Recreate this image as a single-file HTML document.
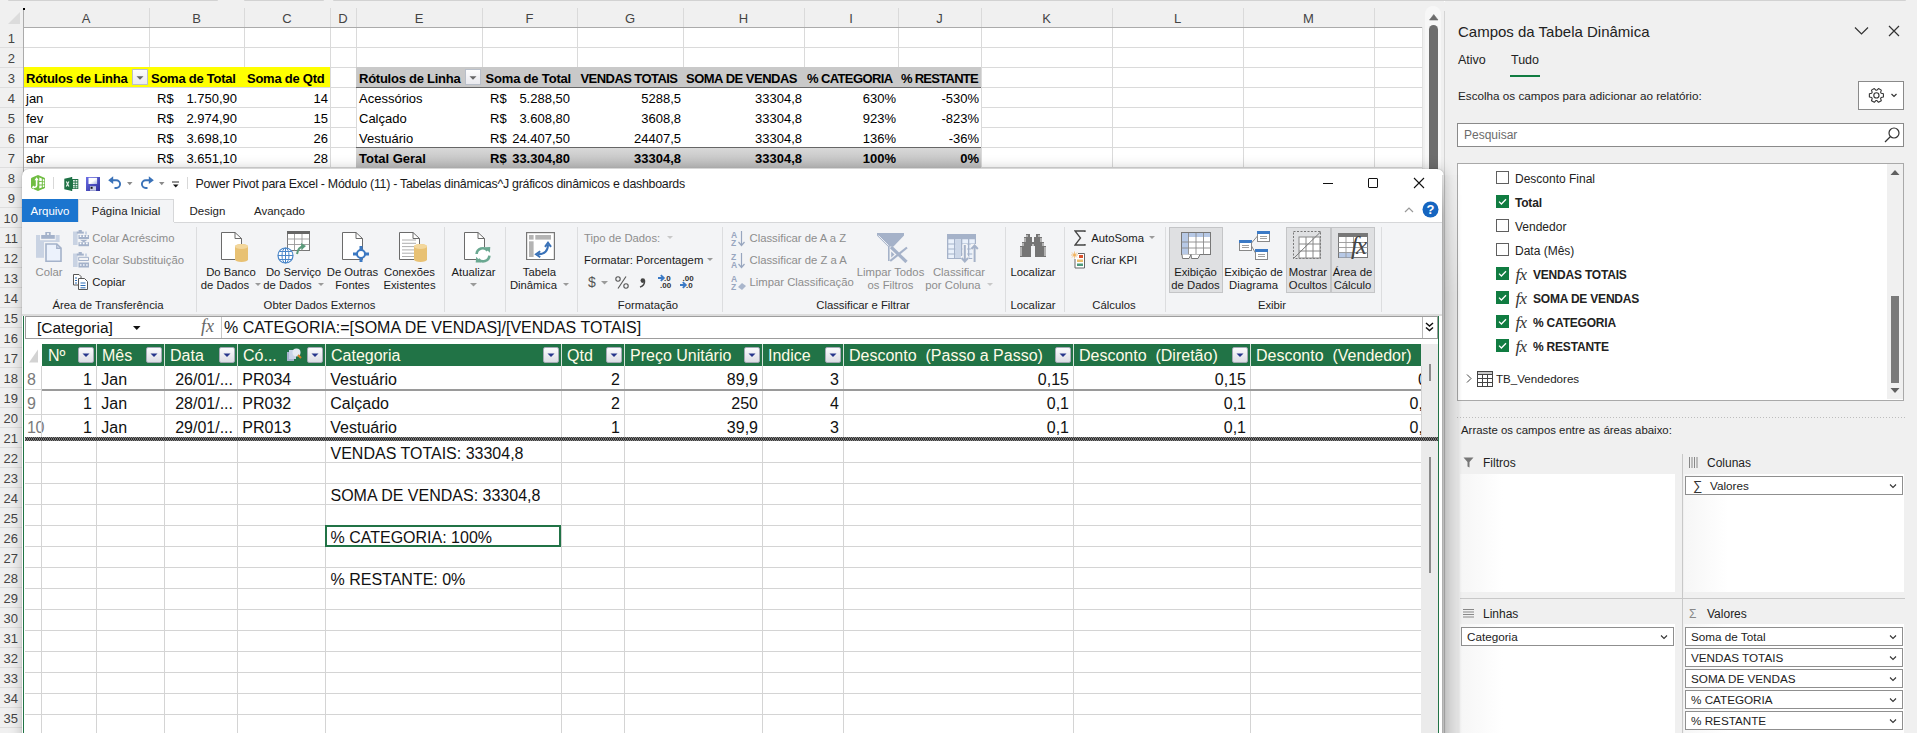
<!DOCTYPE html><html><head><meta charset="utf-8"><style>
*{margin:0;padding:0}
html,body{width:1917px;height:733px;overflow:hidden;background:#fff}
body{position:relative;font-family:"Liberation Sans",sans-serif}
div{position:absolute}
svg{position:absolute}
.t{white-space:nowrap}
.dd{display:inline-block;width:0;height:0;border-left:3.5px solid transparent;border-right:3.5px solid transparent;border-top:3.5px solid #9a9a9a;vertical-align:middle;margin-left:3px;position:relative;top:-1px}
</style></head><body><div style="left:0;top:0;width:1917px;height:733px;background:#fff"></div>
<div style="left:0px;top:0px;width:1444px;height:27px;background:#f0f0f0"></div>
<div style="left:8px;top:0px;width:210px;height:1.2px;background:#d2d2d2;border-radius:0 0 1px 1px"></div>
<div style="left:244px;top:0px;width:80px;height:1.2px;background:#d2d2d2;border-radius:0 0 1px 1px"></div>
<div style="left:333px;top:0px;width:1573px;height:1.2px;background:#d2d2d2;border-radius:0 0 1px 1px"></div>
<div style="left:23px;top:27px;width:1399px;height:1px;background:#ababab"></div>
<div style="left:0px;top:27px;width:23px;height:706px;background:#f0f0f0"></div>
<div style="left:23px;top:10px;width:1px;height:723px;background:#ababab"></div>
<svg style="position:absolute;left:8px;top:12px" width="13" height="13"><path d="M12 0 L12 12 L0 12 Z" fill="#dcdcdc"/></svg>
<div style="left:23px;top:8px;width:1.5px;height:1.5px;background:#000"></div>
<div style="left:149px;top:8px;width:1px;height:19px;background:#dadada"></div>
<div class="t" style="left:23.0px;width:126px;text-align:center;top:9.75px;height:17px;line-height:17px;font-size:13px;color:#444;font-weight:400;">A</div>
<div style="left:244px;top:8px;width:1px;height:19px;background:#dadada"></div>
<div class="t" style="left:149.0px;width:95px;text-align:center;top:9.75px;height:17px;line-height:17px;font-size:13px;color:#444;font-weight:400;">B</div>
<div style="left:330px;top:8px;width:1px;height:19px;background:#dadada"></div>
<div class="t" style="left:244.0px;width:86px;text-align:center;top:9.75px;height:17px;line-height:17px;font-size:13px;color:#444;font-weight:400;">C</div>
<div style="left:356px;top:8px;width:1px;height:19px;background:#dadada"></div>
<div class="t" style="left:330.0px;width:26px;text-align:center;top:9.75px;height:17px;line-height:17px;font-size:13px;color:#444;font-weight:400;">D</div>
<div style="left:482px;top:8px;width:1px;height:19px;background:#dadada"></div>
<div class="t" style="left:356.0px;width:126px;text-align:center;top:9.75px;height:17px;line-height:17px;font-size:13px;color:#444;font-weight:400;">E</div>
<div style="left:577px;top:8px;width:1px;height:19px;background:#dadada"></div>
<div class="t" style="left:482.0px;width:95px;text-align:center;top:9.75px;height:17px;line-height:17px;font-size:13px;color:#444;font-weight:400;">F</div>
<div style="left:683px;top:8px;width:1px;height:19px;background:#dadada"></div>
<div class="t" style="left:577.0px;width:106px;text-align:center;top:9.75px;height:17px;line-height:17px;font-size:13px;color:#444;font-weight:400;">G</div>
<div style="left:804px;top:8px;width:1px;height:19px;background:#dadada"></div>
<div class="t" style="left:683.0px;width:121px;text-align:center;top:9.75px;height:17px;line-height:17px;font-size:13px;color:#444;font-weight:400;">H</div>
<div style="left:898px;top:8px;width:1px;height:19px;background:#dadada"></div>
<div class="t" style="left:804.0px;width:94px;text-align:center;top:9.75px;height:17px;line-height:17px;font-size:13px;color:#444;font-weight:400;">I</div>
<div style="left:981px;top:8px;width:1px;height:19px;background:#dadada"></div>
<div class="t" style="left:898.0px;width:83px;text-align:center;top:9.75px;height:17px;line-height:17px;font-size:13px;color:#444;font-weight:400;">J</div>
<div style="left:1112px;top:8px;width:1px;height:19px;background:#dadada"></div>
<div class="t" style="left:981.0px;width:131px;text-align:center;top:9.75px;height:17px;line-height:17px;font-size:13px;color:#444;font-weight:400;">K</div>
<div style="left:1243px;top:8px;width:1px;height:19px;background:#dadada"></div>
<div class="t" style="left:1112.0px;width:131px;text-align:center;top:9.75px;height:17px;line-height:17px;font-size:13px;color:#444;font-weight:400;">L</div>
<div style="left:1374px;top:8px;width:1px;height:19px;background:#dadada"></div>
<div class="t" style="left:1243.0px;width:131px;text-align:center;top:9.75px;height:17px;line-height:17px;font-size:13px;color:#444;font-weight:400;">M</div>
<div style="left:1422px;top:8px;width:1px;height:19px;background:#dadada"></div>
<div style="left:24px;top:47px;width:1398px;height:1px;background:#dadada"></div>
<div style="left:0px;top:47px;width:23px;height:1px;background:#dedede"></div>
<div style="left:24px;top:67px;width:1398px;height:1px;background:#dadada"></div>
<div style="left:0px;top:67px;width:23px;height:1px;background:#dedede"></div>
<div style="left:24px;top:87px;width:1398px;height:1px;background:#dadada"></div>
<div style="left:0px;top:87px;width:23px;height:1px;background:#dedede"></div>
<div style="left:24px;top:107px;width:333px;height:1px;background:#dadada"></div>
<div style="left:981px;top:107px;width:441px;height:1px;background:#dadada"></div>
<div style="left:0px;top:107px;width:23px;height:1px;background:#dedede"></div>
<div style="left:24px;top:127px;width:333px;height:1px;background:#dadada"></div>
<div style="left:981px;top:127px;width:441px;height:1px;background:#dadada"></div>
<div style="left:0px;top:127px;width:23px;height:1px;background:#dedede"></div>
<div style="left:24px;top:147px;width:1398px;height:1px;background:#dadada"></div>
<div style="left:0px;top:147px;width:23px;height:1px;background:#dedede"></div>
<div style="left:24px;top:167px;width:1398px;height:1px;background:#dadada"></div>
<div style="left:0px;top:167px;width:23px;height:1px;background:#dedede"></div>
<div style="left:149px;top:28px;width:1px;height:40px;background:#dadada"></div>
<div style="left:244px;top:28px;width:1px;height:40px;background:#dadada"></div>
<div style="left:330px;top:28px;width:1px;height:140px;background:#dadada"></div>
<div style="left:356px;top:28px;width:1px;height:140px;background:#dadada"></div>
<div style="left:482px;top:28px;width:1px;height:40px;background:#dadada"></div>
<div style="left:577px;top:28px;width:1px;height:40px;background:#dadada"></div>
<div style="left:683px;top:28px;width:1px;height:40px;background:#dadada"></div>
<div style="left:804px;top:28px;width:1px;height:40px;background:#dadada"></div>
<div style="left:898px;top:28px;width:1px;height:40px;background:#dadada"></div>
<div style="left:981px;top:28px;width:1px;height:140px;background:#dadada"></div>
<div style="left:1112px;top:28px;width:1px;height:140px;background:#dadada"></div>
<div style="left:1243px;top:28px;width:1px;height:140px;background:#dadada"></div>
<div style="left:1374px;top:28px;width:1px;height:140px;background:#dadada"></div>
<div style="left:1422px;top:28px;width:1px;height:140px;background:#dadada"></div>
<div class="t" style="left:-5px;width:20px;text-align:right;top:29.75px;height:17px;line-height:17px;font-size:13px;color:#444;font-weight:400;">1</div>
<div class="t" style="left:-5px;width:20px;text-align:right;top:49.75px;height:17px;line-height:17px;font-size:13px;color:#444;font-weight:400;">2</div>
<div class="t" style="left:-5px;width:20px;text-align:right;top:69.75px;height:17px;line-height:17px;font-size:13px;color:#444;font-weight:400;">3</div>
<div class="t" style="left:-5px;width:20px;text-align:right;top:89.75px;height:17px;line-height:17px;font-size:13px;color:#444;font-weight:400;">4</div>
<div class="t" style="left:-5px;width:20px;text-align:right;top:109.75px;height:17px;line-height:17px;font-size:13px;color:#444;font-weight:400;">5</div>
<div class="t" style="left:-5px;width:20px;text-align:right;top:129.75px;height:17px;line-height:17px;font-size:13px;color:#444;font-weight:400;">6</div>
<div class="t" style="left:-5px;width:20px;text-align:right;top:149.75px;height:17px;line-height:17px;font-size:13px;color:#444;font-weight:400;">7</div>
<div class="t" style="left:-5px;width:20px;text-align:right;top:169.75px;height:17px;line-height:17px;font-size:13px;color:#444;font-weight:400;">8</div>
<div class="t" style="left:-5px;width:20px;text-align:right;top:189.75px;height:17px;line-height:17px;font-size:13px;color:#444;font-weight:400;">9</div>
<div class="t" style="left:-2px;width:20px;text-align:right;top:209.75px;height:17px;line-height:17px;font-size:13px;color:#444;font-weight:400;">10</div>
<div class="t" style="left:-2px;width:20px;text-align:right;top:229.75px;height:17px;line-height:17px;font-size:13px;color:#444;font-weight:400;">11</div>
<div class="t" style="left:-2px;width:20px;text-align:right;top:249.75px;height:17px;line-height:17px;font-size:13px;color:#444;font-weight:400;">12</div>
<div class="t" style="left:-2px;width:20px;text-align:right;top:269.75px;height:17px;line-height:17px;font-size:13px;color:#444;font-weight:400;">13</div>
<div class="t" style="left:-2px;width:20px;text-align:right;top:289.75px;height:17px;line-height:17px;font-size:13px;color:#444;font-weight:400;">14</div>
<div class="t" style="left:-2px;width:20px;text-align:right;top:309.75px;height:17px;line-height:17px;font-size:13px;color:#444;font-weight:400;">15</div>
<div class="t" style="left:-2px;width:20px;text-align:right;top:329.75px;height:17px;line-height:17px;font-size:13px;color:#444;font-weight:400;">16</div>
<div class="t" style="left:-2px;width:20px;text-align:right;top:349.75px;height:17px;line-height:17px;font-size:13px;color:#444;font-weight:400;">17</div>
<div class="t" style="left:-2px;width:20px;text-align:right;top:369.75px;height:17px;line-height:17px;font-size:13px;color:#444;font-weight:400;">18</div>
<div class="t" style="left:-2px;width:20px;text-align:right;top:389.75px;height:17px;line-height:17px;font-size:13px;color:#444;font-weight:400;">19</div>
<div class="t" style="left:-2px;width:20px;text-align:right;top:409.75px;height:17px;line-height:17px;font-size:13px;color:#444;font-weight:400;">20</div>
<div class="t" style="left:-2px;width:20px;text-align:right;top:429.75px;height:17px;line-height:17px;font-size:13px;color:#444;font-weight:400;">21</div>
<div class="t" style="left:-2px;width:20px;text-align:right;top:449.75px;height:17px;line-height:17px;font-size:13px;color:#444;font-weight:400;">22</div>
<div class="t" style="left:-2px;width:20px;text-align:right;top:469.75px;height:17px;line-height:17px;font-size:13px;color:#444;font-weight:400;">23</div>
<div class="t" style="left:-2px;width:20px;text-align:right;top:489.75px;height:17px;line-height:17px;font-size:13px;color:#444;font-weight:400;">24</div>
<div class="t" style="left:-2px;width:20px;text-align:right;top:509.75px;height:17px;line-height:17px;font-size:13px;color:#444;font-weight:400;">25</div>
<div class="t" style="left:-2px;width:20px;text-align:right;top:529.75px;height:17px;line-height:17px;font-size:13px;color:#444;font-weight:400;">26</div>
<div class="t" style="left:-2px;width:20px;text-align:right;top:549.75px;height:17px;line-height:17px;font-size:13px;color:#444;font-weight:400;">27</div>
<div class="t" style="left:-2px;width:20px;text-align:right;top:569.75px;height:17px;line-height:17px;font-size:13px;color:#444;font-weight:400;">28</div>
<div class="t" style="left:-2px;width:20px;text-align:right;top:589.75px;height:17px;line-height:17px;font-size:13px;color:#444;font-weight:400;">29</div>
<div class="t" style="left:-2px;width:20px;text-align:right;top:609.75px;height:17px;line-height:17px;font-size:13px;color:#444;font-weight:400;">30</div>
<div class="t" style="left:-2px;width:20px;text-align:right;top:629.75px;height:17px;line-height:17px;font-size:13px;color:#444;font-weight:400;">31</div>
<div class="t" style="left:-2px;width:20px;text-align:right;top:649.75px;height:17px;line-height:17px;font-size:13px;color:#444;font-weight:400;">32</div>
<div class="t" style="left:-2px;width:20px;text-align:right;top:669.75px;height:17px;line-height:17px;font-size:13px;color:#444;font-weight:400;">33</div>
<div class="t" style="left:-2px;width:20px;text-align:right;top:689.75px;height:17px;line-height:17px;font-size:13px;color:#444;font-weight:400;">34</div>
<div class="t" style="left:-2px;width:20px;text-align:right;top:709.75px;height:17px;line-height:17px;font-size:13px;color:#444;font-weight:400;">35</div>
<div style="left:0px;top:187px;width:22px;height:1px;background:#dedede"></div>
<div style="left:0px;top:207px;width:22px;height:1px;background:#dedede"></div>
<div style="left:0px;top:227px;width:22px;height:1px;background:#dedede"></div>
<div style="left:0px;top:247px;width:22px;height:1px;background:#dedede"></div>
<div style="left:0px;top:267px;width:22px;height:1px;background:#dedede"></div>
<div style="left:0px;top:287px;width:22px;height:1px;background:#dedede"></div>
<div style="left:0px;top:307px;width:22px;height:1px;background:#dedede"></div>
<div style="left:0px;top:327px;width:22px;height:1px;background:#dedede"></div>
<div style="left:0px;top:347px;width:22px;height:1px;background:#dedede"></div>
<div style="left:0px;top:367px;width:22px;height:1px;background:#dedede"></div>
<div style="left:0px;top:387px;width:22px;height:1px;background:#dedede"></div>
<div style="left:0px;top:407px;width:22px;height:1px;background:#dedede"></div>
<div style="left:0px;top:427px;width:22px;height:1px;background:#dedede"></div>
<div style="left:0px;top:447px;width:22px;height:1px;background:#dedede"></div>
<div style="left:0px;top:467px;width:22px;height:1px;background:#dedede"></div>
<div style="left:0px;top:487px;width:22px;height:1px;background:#dedede"></div>
<div style="left:0px;top:507px;width:22px;height:1px;background:#dedede"></div>
<div style="left:0px;top:527px;width:22px;height:1px;background:#dedede"></div>
<div style="left:0px;top:547px;width:22px;height:1px;background:#dedede"></div>
<div style="left:0px;top:567px;width:22px;height:1px;background:#dedede"></div>
<div style="left:0px;top:587px;width:22px;height:1px;background:#dedede"></div>
<div style="left:0px;top:607px;width:22px;height:1px;background:#dedede"></div>
<div style="left:0px;top:627px;width:22px;height:1px;background:#dedede"></div>
<div style="left:0px;top:647px;width:22px;height:1px;background:#dedede"></div>
<div style="left:0px;top:667px;width:22px;height:1px;background:#dedede"></div>
<div style="left:0px;top:687px;width:22px;height:1px;background:#dedede"></div>
<div style="left:0px;top:707px;width:22px;height:1px;background:#dedede"></div>
<div style="left:0px;top:727px;width:22px;height:1px;background:#dedede"></div>
<div style="left:24px;top:67px;width:306px;height:20px;background:#ffff00"></div>
<div class="t" style="left:26px;white-space:nowrap;top:69.75px;height:17px;line-height:17px;font-size:13px;color:#000;font-weight:700;letter-spacing:-0.25px">Rótulos de Linha</div>
<div class="t" style="left:151px;white-space:nowrap;top:69.75px;height:17px;line-height:17px;font-size:13px;color:#000;font-weight:700;letter-spacing:-0.25px">Soma de Total</div>
<div class="t" style="left:247px;white-space:nowrap;top:69.75px;height:17px;line-height:17px;font-size:13px;color:#000;font-weight:700;letter-spacing:-0.25px">Soma de Qtd</div>
<div style="left:132px;top:69px;width:16px;height:16px;background:linear-gradient(#fdfdfd,#e9e9ee);border:1px solid #b9bfc9;box-sizing:border-box"><svg width="14" height="14" style="position:absolute;left:0;top:0"><path d="M3.5 6.3 L10.5 6.3 L7 9.8 Z" fill="#666"/></svg></div>
<div class="t" style="left:26px;white-space:nowrap;top:89.75px;height:17px;line-height:17px;font-size:13px;color:#000;font-weight:400;">jan</div>
<div class="t" style="left:157px;white-space:nowrap;top:89.75px;height:17px;line-height:17px;font-size:13px;color:#000;font-weight:400;">R$</div>
<div class="t" style="left:137px;width:100px;text-align:right;top:89.75px;height:17px;line-height:17px;font-size:13px;color:#000;font-weight:400;">1.750,90</div>
<div class="t" style="left:268px;width:60px;text-align:right;top:89.75px;height:17px;line-height:17px;font-size:13px;color:#000;font-weight:400;">14</div>
<div class="t" style="left:26px;white-space:nowrap;top:109.75px;height:17px;line-height:17px;font-size:13px;color:#000;font-weight:400;">fev</div>
<div class="t" style="left:157px;white-space:nowrap;top:109.75px;height:17px;line-height:17px;font-size:13px;color:#000;font-weight:400;">R$</div>
<div class="t" style="left:137px;width:100px;text-align:right;top:109.75px;height:17px;line-height:17px;font-size:13px;color:#000;font-weight:400;">2.974,90</div>
<div class="t" style="left:268px;width:60px;text-align:right;top:109.75px;height:17px;line-height:17px;font-size:13px;color:#000;font-weight:400;">15</div>
<div class="t" style="left:26px;white-space:nowrap;top:129.75px;height:17px;line-height:17px;font-size:13px;color:#000;font-weight:400;">mar</div>
<div class="t" style="left:157px;white-space:nowrap;top:129.75px;height:17px;line-height:17px;font-size:13px;color:#000;font-weight:400;">R$</div>
<div class="t" style="left:137px;width:100px;text-align:right;top:129.75px;height:17px;line-height:17px;font-size:13px;color:#000;font-weight:400;">3.698,10</div>
<div class="t" style="left:268px;width:60px;text-align:right;top:129.75px;height:17px;line-height:17px;font-size:13px;color:#000;font-weight:400;">26</div>
<div class="t" style="left:26px;white-space:nowrap;top:149.75px;height:17px;line-height:17px;font-size:13px;color:#000;font-weight:400;">abr</div>
<div class="t" style="left:157px;white-space:nowrap;top:149.75px;height:17px;line-height:17px;font-size:13px;color:#000;font-weight:400;">R$</div>
<div class="t" style="left:137px;width:100px;text-align:right;top:149.75px;height:17px;line-height:17px;font-size:13px;color:#000;font-weight:400;">3.651,10</div>
<div class="t" style="left:268px;width:60px;text-align:right;top:149.75px;height:17px;line-height:17px;font-size:13px;color:#000;font-weight:400;">28</div>
<div style="left:356px;top:67px;width:625px;height:20px;background:#c9c9c9"></div>
<div style="left:356px;top:87px;width:625px;height:1px;background:#666"></div>
<div class="t" style="left:359px;white-space:nowrap;top:69.75px;height:17px;line-height:17px;font-size:13px;color:#000;font-weight:700;letter-spacing:-0.25px">Rótulos de Linha</div>
<div style="left:465px;top:69px;width:16px;height:16px;background:linear-gradient(#fdfdfd,#e9e9ee);border:1px solid #b9bfc9;box-sizing:border-box"><svg width="14" height="14" style="position:absolute;left:0;top:0"><path d="M3.5 6.3 L10.5 6.3 L7 9.8 Z" fill="#666"/></svg></div>
<div class="t" style="left:485.5px;white-space:nowrap;top:69.75px;height:17px;line-height:17px;font-size:13px;color:#000;font-weight:700;letter-spacing:-0.18px">Soma de Total</div>
<div class="t" style="left:580.5px;white-space:nowrap;top:69.75px;height:17px;line-height:17px;font-size:13px;color:#000;font-weight:700;letter-spacing:-0.56px">VENDAS TOTAIS</div>
<div class="t" style="left:686px;white-space:nowrap;top:69.75px;height:17px;line-height:17px;font-size:13px;color:#000;font-weight:700;letter-spacing:-0.5px">SOMA DE VENDAS</div>
<div class="t" style="left:807px;white-space:nowrap;top:69.75px;height:17px;line-height:17px;font-size:13px;color:#000;font-weight:700;letter-spacing:-0.61px">% CATEGORIA</div>
<div class="t" style="left:901px;white-space:nowrap;top:69.75px;height:17px;line-height:17px;font-size:13px;color:#000;font-weight:700;letter-spacing:-0.73px">% RESTANTE</div>
<div class="t" style="left:359px;white-space:nowrap;top:89.75px;height:17px;line-height:17px;font-size:13px;color:#000;font-weight:400;">Acessórios</div>
<div class="t" style="left:490px;white-space:nowrap;top:89.75px;height:17px;line-height:17px;font-size:13px;color:#000;font-weight:400;">R$</div>
<div class="t" style="left:470px;width:100px;text-align:right;top:89.75px;height:17px;line-height:17px;font-size:13px;color:#000;font-weight:400;">5.288,50</div>
<div class="t" style="left:581px;width:100px;text-align:right;top:89.75px;height:17px;line-height:17px;font-size:13px;color:#000;font-weight:400;">5288,5</div>
<div class="t" style="left:702px;width:100px;text-align:right;top:89.75px;height:17px;line-height:17px;font-size:13px;color:#000;font-weight:400;">33304,8</div>
<div class="t" style="left:796px;width:100px;text-align:right;top:89.75px;height:17px;line-height:17px;font-size:13px;color:#000;font-weight:400;">630%</div>
<div class="t" style="left:879px;width:100px;text-align:right;top:89.75px;height:17px;line-height:17px;font-size:13px;color:#000;font-weight:400;">-530%</div>
<div class="t" style="left:359px;white-space:nowrap;top:109.75px;height:17px;line-height:17px;font-size:13px;color:#000;font-weight:400;">Calçado</div>
<div class="t" style="left:490px;white-space:nowrap;top:109.75px;height:17px;line-height:17px;font-size:13px;color:#000;font-weight:400;">R$</div>
<div class="t" style="left:470px;width:100px;text-align:right;top:109.75px;height:17px;line-height:17px;font-size:13px;color:#000;font-weight:400;">3.608,80</div>
<div class="t" style="left:581px;width:100px;text-align:right;top:109.75px;height:17px;line-height:17px;font-size:13px;color:#000;font-weight:400;">3608,8</div>
<div class="t" style="left:702px;width:100px;text-align:right;top:109.75px;height:17px;line-height:17px;font-size:13px;color:#000;font-weight:400;">33304,8</div>
<div class="t" style="left:796px;width:100px;text-align:right;top:109.75px;height:17px;line-height:17px;font-size:13px;color:#000;font-weight:400;">923%</div>
<div class="t" style="left:879px;width:100px;text-align:right;top:109.75px;height:17px;line-height:17px;font-size:13px;color:#000;font-weight:400;">-823%</div>
<div class="t" style="left:359px;white-space:nowrap;top:129.75px;height:17px;line-height:17px;font-size:13px;color:#000;font-weight:400;">Vestuário</div>
<div class="t" style="left:490px;white-space:nowrap;top:129.75px;height:17px;line-height:17px;font-size:13px;color:#000;font-weight:400;">R$</div>
<div class="t" style="left:470px;width:100px;text-align:right;top:129.75px;height:17px;line-height:17px;font-size:13px;color:#000;font-weight:400;">24.407,50</div>
<div class="t" style="left:581px;width:100px;text-align:right;top:129.75px;height:17px;line-height:17px;font-size:13px;color:#000;font-weight:400;">24407,5</div>
<div class="t" style="left:702px;width:100px;text-align:right;top:129.75px;height:17px;line-height:17px;font-size:13px;color:#000;font-weight:400;">33304,8</div>
<div class="t" style="left:796px;width:100px;text-align:right;top:129.75px;height:17px;line-height:17px;font-size:13px;color:#000;font-weight:400;">136%</div>
<div class="t" style="left:879px;width:100px;text-align:right;top:129.75px;height:17px;line-height:17px;font-size:13px;color:#000;font-weight:400;">-36%</div>
<div style="left:356px;top:147px;width:625px;height:1px;background:#666"></div>
<div style="left:356px;top:148px;width:625px;height:20px;background:linear-gradient(#d8d8d8,#c4c4c4 70%,#bdbdbd)"></div>
<div class="t" style="left:359px;white-space:nowrap;top:149.75px;height:17px;line-height:17px;font-size:13px;color:#000;font-weight:700;">Total Geral</div>
<div class="t" style="left:490px;white-space:nowrap;top:149.75px;height:17px;line-height:17px;font-size:13px;color:#000;font-weight:700;">R$</div>
<div class="t" style="left:470px;width:100px;text-align:right;top:149.75px;height:17px;line-height:17px;font-size:13px;color:#000;font-weight:700;">33.304,80</div>
<div class="t" style="left:581px;width:100px;text-align:right;top:149.75px;height:17px;line-height:17px;font-size:13px;color:#000;font-weight:700;">33304,8</div>
<div class="t" style="left:702px;width:100px;text-align:right;top:149.75px;height:17px;line-height:17px;font-size:13px;color:#000;font-weight:700;">33304,8</div>
<div class="t" style="left:796px;width:100px;text-align:right;top:149.75px;height:17px;line-height:17px;font-size:13px;color:#000;font-weight:700;">100%</div>
<div class="t" style="left:879px;width:100px;text-align:right;top:149.75px;height:17px;line-height:17px;font-size:13px;color:#000;font-weight:700;">0%</div>
<div style="left:1422px;top:0px;width:22px;height:733px;background:#f0f0f0"></div>
<div style="left:1425px;top:6px;width:16px;height:727px;background:#f7f7f7;border-radius:8px"></div>
<svg style="position:absolute;left:1428.5px;top:12.5px" width="10" height="8"><path d="M0.5 7 L4.75 1.5 L9 7 Z" fill="#6d6d6d" stroke="#6d6d6d" stroke-width="0.6" stroke-linejoin="round"/></svg>
<div style="left:1429px;top:25px;width:9px;height:708px;background:#6d6d6d;border-radius:4.5px"></div>
<div style="left:1444px;top:10px;width:1px;height:723px;background:#d4d4d4"></div>
<div style="left:1445px;top:0px;width:472px;height:733px;background:#f0f0f0"></div>
<div style="left:1420px;top:0px;width:486px;height:1.2px;background:#d2d2d2;border-radius:0 0 1px 1px"></div>
<div style="left:1422px;top:27px;width:1px;height:142px;background:#e2e2e2"></div>
<div style="left:1444px;top:1.5px;width:1px;height:9px;background:#f0f0f0"></div>
<div class="t" style="left:1458px;white-space:nowrap;top:21.75px;height:20px;line-height:20px;font-size:15px;color:#222;font-weight:400;">Campos da Tabela Dinâmica</div>
<svg style="position:absolute;left:1854px;top:26px" width="15" height="10"><path d="M1 1.5 L7.5 8 L14 1.5" stroke="#333" stroke-width="1.2" fill="none"/></svg>
<svg style="position:absolute;left:1888px;top:25px" width="12" height="12"><path d="M1 1 L11 11 M11 1 L1 11" stroke="#333" stroke-width="1.2" fill="none"/></svg>
<div class="t" style="left:1458px;white-space:nowrap;top:51.75px;height:16px;line-height:16px;font-size:12.5px;color:#222;font-weight:400;">Ativo</div>
<div class="t" style="left:1511px;white-space:nowrap;top:51.75px;height:16px;line-height:16px;font-size:12.5px;color:#222;font-weight:400;">Tudo</div>
<div style="left:1510px;top:75px;width:30px;height:2px;background:#107c41"></div>
<div class="t" style="left:1458px;white-space:nowrap;top:88.25px;height:15px;line-height:15px;font-size:11.7px;color:#222;font-weight:400;">Escolha os campos para adicionar ao relatório:</div>
<div style="left:1858px;top:81px;width:46px;height:29px;background:#fff;border:1px solid #8a8a8a;box-sizing:border-box"><svg width="46" height="29" style="position:absolute;left:-1px;top:-1px"><g transform="translate(18.4,14.4)" fill="none" stroke="#333" stroke-width="1.1" stroke-linejoin="round"><circle r="2.6"/><path d="M4.75,-2.12 L7.02,-1.62 L7.02,1.62 L4.75,2.12 L4.21,3.06 L4.91,5.27 L2.11,6.89 L0.54,5.17 L-0.54,5.17 L-2.11,6.89 L-4.91,5.27 L-4.21,3.06 L-4.75,2.12 L-7.02,1.62 L-7.02,-1.62 L-4.75,-2.12 L-4.21,-3.06 L-4.91,-5.27 L-2.11,-6.89 L-0.54,-5.17 L0.54,-5.17 L2.11,-6.89 L4.91,-5.27 L4.21,-3.06 Z"/></g><path d="M33.5 13 L36 15.5 L38.5 13" stroke="#333" stroke-width="1.2" fill="none"/></svg></div>
<div style="left:1457px;top:123px;width:447px;height:24px;background:#fff;border:1px solid #8a8a8a;box-sizing:border-box"></div>
<div class="t" style="left:1464px;white-space:nowrap;top:126.75px;height:16px;line-height:16px;font-size:12px;color:#6b6b6b;font-weight:400;">Pesquisar</div>
<svg style="position:absolute;left:1883px;top:125px" width="18" height="20"><circle cx="11" cy="8" r="5" stroke="#333" stroke-width="1.2" fill="none"/><path d="M7.5 11.5 L2 17" stroke="#333" stroke-width="1.3"/></svg>
<div style="left:1457px;top:163px;width:447px;height:238px;background:#fff;border:1px solid #a9a9a9;box-sizing:border-box"></div>
<div style="left:1887px;top:164px;width:16px;height:235px;background:#f0f0f0"></div>
<svg style="position:absolute;left:1889px;top:167px" width="12" height="10"><path d="M1.5 8 L6 3 L10.5 8 Z" fill="#606060"/></svg>
<svg style="position:absolute;left:1889px;top:386px" width="12" height="10"><path d="M1.5 2 L6 7 L10.5 2 Z" fill="#606060"/></svg>
<div style="left:1891px;top:296px;width:8px;height:87px;background:#7a7a7a"></div>
<div style="left:1496px;top:171.0px;width:13px;height:13px;background:#fff;border:1px solid #5f5f5f;box-sizing:border-box"></div>
<div class="t" style="left:1515px;white-space:nowrap;top:170.55px;height:16px;line-height:16px;font-size:12px;color:#222;font-weight:400;">Desconto Final</div>
<div style="left:1496px;top:195.05px;width:13px;height:13px;background:#107c41"><svg width="13" height="13" style="position:absolute;left:0;top:0"><path d="M3 6.6 L5.4 9 L10 4.2" stroke="#fff" stroke-width="1.3" fill="none"/></svg></div>
<div class="t" style="left:1515px;white-space:nowrap;top:194.60px;height:16px;line-height:16px;font-size:12px;color:#222;font-weight:700;letter-spacing:-0.2px">Total</div>
<div style="left:1496px;top:219.1px;width:13px;height:13px;background:#fff;border:1px solid #5f5f5f;box-sizing:border-box"></div>
<div class="t" style="left:1515px;white-space:nowrap;top:218.65px;height:16px;line-height:16px;font-size:12px;color:#222;font-weight:400;">Vendedor</div>
<div style="left:1496px;top:243.15px;width:13px;height:13px;background:#fff;border:1px solid #5f5f5f;box-sizing:border-box"></div>
<div class="t" style="left:1515px;white-space:nowrap;top:242.70px;height:16px;line-height:16px;font-size:12px;color:#222;font-weight:400;">Data (Mês)</div>
<div style="left:1496px;top:267.2px;width:13px;height:13px;background:#107c41"><svg width="13" height="13" style="position:absolute;left:0;top:0"><path d="M3 6.6 L5.4 9 L10 4.2" stroke="#fff" stroke-width="1.3" fill="none"/></svg></div>
<div class="t" style="left:1515.5px;white-space:nowrap;top:263.75px;height:22px;line-height:22px;font-size:17px;color:#333;font-weight:400;font-family:'Liberation Serif',serif;font-style:italic;letter-spacing:-0.8px">fx</div>
<div class="t" style="left:1533px;white-space:nowrap;top:266.75px;height:16px;line-height:16px;font-size:12px;color:#222;font-weight:700;letter-spacing:-0.2px">VENDAS TOTAIS</div>
<div style="left:1496px;top:291.25px;width:13px;height:13px;background:#107c41"><svg width="13" height="13" style="position:absolute;left:0;top:0"><path d="M3 6.6 L5.4 9 L10 4.2" stroke="#fff" stroke-width="1.3" fill="none"/></svg></div>
<div class="t" style="left:1515.5px;white-space:nowrap;top:287.80px;height:22px;line-height:22px;font-size:17px;color:#333;font-weight:400;font-family:'Liberation Serif',serif;font-style:italic;letter-spacing:-0.8px">fx</div>
<div class="t" style="left:1533px;white-space:nowrap;top:290.80px;height:16px;line-height:16px;font-size:12px;color:#222;font-weight:700;letter-spacing:-0.2px">SOMA DE VENDAS</div>
<div style="left:1496px;top:315.3px;width:13px;height:13px;background:#107c41"><svg width="13" height="13" style="position:absolute;left:0;top:0"><path d="M3 6.6 L5.4 9 L10 4.2" stroke="#fff" stroke-width="1.3" fill="none"/></svg></div>
<div class="t" style="left:1515.5px;white-space:nowrap;top:311.85px;height:22px;line-height:22px;font-size:17px;color:#333;font-weight:400;font-family:'Liberation Serif',serif;font-style:italic;letter-spacing:-0.8px">fx</div>
<div class="t" style="left:1533px;white-space:nowrap;top:314.85px;height:16px;line-height:16px;font-size:12px;color:#222;font-weight:700;letter-spacing:-0.2px">% CATEGORIA</div>
<div style="left:1496px;top:339.34999999999997px;width:13px;height:13px;background:#107c41"><svg width="13" height="13" style="position:absolute;left:0;top:0"><path d="M3 6.6 L5.4 9 L10 4.2" stroke="#fff" stroke-width="1.3" fill="none"/></svg></div>
<div class="t" style="left:1515.5px;white-space:nowrap;top:335.90px;height:22px;line-height:22px;font-size:17px;color:#333;font-weight:400;font-family:'Liberation Serif',serif;font-style:italic;letter-spacing:-0.8px">fx</div>
<div class="t" style="left:1533px;white-space:nowrap;top:338.90px;height:16px;line-height:16px;font-size:12px;color:#222;font-weight:700;letter-spacing:-0.2px">% RESTANTE</div>
<svg style="position:absolute;left:1465px;top:373px" width="8" height="11"><path d="M2 1.5 L6 5.5 L2 9.5" stroke="#444" stroke-width="1" fill="none"/></svg>
<svg style="position:absolute;left:1477px;top:371px" width="17" height="17"><g fill="none" stroke="#444" stroke-width="1"><rect x="0.5" y="0.5" width="15" height="15"/><path d="M0.5 7.5 H15.5 M0.5 11.5 H15.5 M5.5 3.5 V15.5 M10.5 3.5 V15.5 M0.5 3.5 H15.5"/></g><rect x="1" y="1" width="14" height="2" fill="#c8c8c8"/></svg>
<div class="t" style="left:1496px;white-space:nowrap;top:370.75px;height:15px;line-height:15px;font-size:11.6px;color:#222;font-weight:400;">TB_Vendedores</div>
<div style="left:1457px;top:417px;width:450px;height:1px;background-image:linear-gradient(90deg,#bdbdbd 50%,transparent 50%);background-size:3px 1px"></div>
<div class="t" style="left:1461px;white-space:nowrap;top:422.75px;height:15px;line-height:15px;font-size:11.4px;color:#222;font-weight:400;">Arraste os campos entre as áreas abaixo:</div>
<svg style="position:absolute;left:1463px;top:457px" width="11" height="11"><path d="M0.5 0.5 H10.5 L6.5 5 V10.5 L4.5 9.5 V5 Z" fill="#777"/></svg>
<div class="t" style="left:1483px;white-space:nowrap;top:455.05px;height:16px;line-height:16px;font-size:12px;color:#222;font-weight:400;">Filtros</div>
<svg style="position:absolute;left:1689px;top:457px" width="10" height="11"><path d="M0.5 0 V11 M3 0 V11 M5.5 0 V11 M8 0 V11" stroke="#888" stroke-width="1"/></svg>
<div class="t" style="left:1707px;white-space:nowrap;top:455.05px;height:16px;line-height:16px;font-size:12px;color:#222;font-weight:400;">Colunas</div>
<div style="left:1460px;top:474px;width:215px;height:118px;background:linear-gradient(90deg,#f6f6f6,#fff 20%)"></div>
<div style="left:1684px;top:474px;width:220px;height:118px;background:linear-gradient(90deg,#f6f6f6,#fff 20%)"></div>
<div style="left:1682px;top:454px;width:1px;height:279px;background:#c8c8c8"></div>
<div style="left:1460px;top:598px;width:445px;height:1px;background:#c8c8c8"></div>
<svg style="position:absolute;left:1463px;top:608px" width="11" height="11"><path d="M0 1.5 H11 M0 4 H11 M0 6.5 H11 M0 9 H11" stroke="#888" stroke-width="1"/></svg>
<div class="t" style="left:1483px;white-space:nowrap;top:606.25px;height:16px;line-height:16px;font-size:12px;color:#222;font-weight:400;">Linhas</div>
<div class="t" style="left:1689px;white-space:nowrap;top:606.25px;height:16px;line-height:16px;font-size:12px;color:#888;font-weight:400;">Σ</div>
<div class="t" style="left:1707px;white-space:nowrap;top:606.25px;height:16px;line-height:16px;font-size:12px;color:#222;font-weight:400;">Valores</div>
<div style="left:1460px;top:624px;width:215px;height:109px;background:linear-gradient(90deg,#f6f6f6,#fff 20%)"></div>
<div style="left:1684px;top:624px;width:220px;height:109px;background:linear-gradient(90deg,#f6f6f6,#fff 20%)"></div>
<div style="left:1685px;top:476px;width:218px;height:19px;background:#fff;border:1px solid #8f8f8f;box-sizing:border-box"></div>
<div class="t" style="left:1693px;white-space:nowrap;top:477.25px;height:17px;line-height:17px;font-size:13px;color:#333;font-weight:400;">∑</div>
<div class="t" style="left:1710px;white-space:nowrap;top:477.75px;height:15px;line-height:15px;font-size:11.7px;color:#222;font-weight:400;">Valores</div>
<svg style="position:absolute;left:1889px;top:483px" width="8" height="6"><path d="M1 1.5 L4 4.5 L7 1.5" stroke="#333" stroke-width="1.1" fill="none"/></svg>
<div style="left:1461px;top:627px;width:213px;height:19px;background:#fff;border:1px solid #8f8f8f;box-sizing:border-box"></div>
<div class="t" style="left:1467px;white-space:nowrap;top:628.75px;height:15px;line-height:15px;font-size:11.7px;color:#222;font-weight:400;">Categoria</div>
<svg style="position:absolute;left:1660px;top:634px" width="8" height="6"><path d="M1 1.5 L4 4.5 L7 1.5" stroke="#333" stroke-width="1.1" fill="none"/></svg>
<div style="left:1685px;top:627px;width:218px;height:19px;background:#fff;border:1px solid #8f8f8f;box-sizing:border-box"></div>
<div class="t" style="left:1691px;white-space:nowrap;top:628.75px;height:15px;line-height:15px;font-size:11.7px;color:#222;font-weight:400;">Soma de Total</div>
<svg style="position:absolute;left:1889px;top:634px" width="8" height="6"><path d="M1 1.5 L4 4.5 L7 1.5" stroke="#333" stroke-width="1.1" fill="none"/></svg>
<div style="left:1685px;top:648px;width:218px;height:19px;background:#fff;border:1px solid #8f8f8f;box-sizing:border-box"></div>
<div class="t" style="left:1691px;white-space:nowrap;top:649.75px;height:15px;line-height:15px;font-size:11.7px;color:#222;font-weight:400;">VENDAS TOTAIS</div>
<svg style="position:absolute;left:1889px;top:655px" width="8" height="6"><path d="M1 1.5 L4 4.5 L7 1.5" stroke="#333" stroke-width="1.1" fill="none"/></svg>
<div style="left:1685px;top:669px;width:218px;height:19px;background:#fff;border:1px solid #8f8f8f;box-sizing:border-box"></div>
<div class="t" style="left:1691px;white-space:nowrap;top:670.75px;height:15px;line-height:15px;font-size:11.7px;color:#222;font-weight:400;">SOMA DE VENDAS</div>
<svg style="position:absolute;left:1889px;top:676px" width="8" height="6"><path d="M1 1.5 L4 4.5 L7 1.5" stroke="#333" stroke-width="1.1" fill="none"/></svg>
<div style="left:1685px;top:690px;width:218px;height:19px;background:#fff;border:1px solid #8f8f8f;box-sizing:border-box"></div>
<div class="t" style="left:1691px;white-space:nowrap;top:691.75px;height:15px;line-height:15px;font-size:11.7px;color:#222;font-weight:400;">% CATEGORIA</div>
<svg style="position:absolute;left:1889px;top:697px" width="8" height="6"><path d="M1 1.5 L4 4.5 L7 1.5" stroke="#333" stroke-width="1.1" fill="none"/></svg>
<div style="left:1685px;top:711px;width:218px;height:19px;background:#fff;border:1px solid #8f8f8f;box-sizing:border-box"></div>
<div class="t" style="left:1691px;white-space:nowrap;top:712.75px;height:15px;line-height:15px;font-size:11.7px;color:#222;font-weight:400;">% RESTANTE</div>
<svg style="position:absolute;left:1889px;top:718px" width="8" height="6"><path d="M1 1.5 L4 4.5 L7 1.5" stroke="#333" stroke-width="1.1" fill="none"/></svg>
<div style="left:22px;top:169px;width:1422px;height:584px;background:#fff;border-radius:7px 7px 0 0;box-shadow:0 0 14px rgba(0,0,0,0.22), 0 0 1.5px rgba(0,0,0,0.3)"></div>
<svg style="position:absolute;left:30px;top:175px" width="16" height="16" viewBox="0 0 16 16">
<path d="M1 3.6 Q1 3 1.6 2.7 L7.4 0.2 Q8 0 8.6 0.2 L14.4 2.7 Q15 3 15 3.6 V12.4 Q15 13 14.4 13.3 L8.6 15.8 Q8 16 7.4 15.8 L1.6 13.3 Q1 13 1 12.4 Z" fill="#70bd43"/>
<path d="M9.3 2.6 L11.8 3.6 V6.2 L9.3 5.9 Z M12.8 4 L14.3 4.6 V6.4 L12.8 6.3 Z M9.3 6.9 L11.8 7.1 V9.5 L9.3 9.6 Z M12.8 7.2 L14.3 7.3 V9.3 L12.8 9.4 Z M9.3 10.6 L11.8 10.4 V12.4 L9.3 13.4 Z M12.8 10.3 L14.3 10.2 V11.8 L12.8 12.2 Z" fill="#fff"/>
<path d="M3.5 12.2 H5 Q6.6 12.2 6.6 10.6 V4.6" stroke="#fff" stroke-width="1.6" fill="none"/>
<path d="M4.5 5.2 L6.6 2.2 L8.7 5.2 Z M4 10.6 L1.6 12.2 L4 13.8 Z" fill="#fff"/>
</svg>
<div style="left:53px;top:177px;width:1px;height:12px;background:#d8d8d8"></div>
<svg style="position:absolute;left:64px;top:177px" width="15" height="14" viewBox="0 0 15 14">
<path d="M0.3 1.8 L7 0.2 V13.8 L0.3 12.2 Z" fill="#1e7145"/>
<rect x="7" y="0" width="1.2" height="14" fill="#1e7145"/>
<rect x="8" y="2" width="6.3" height="10" fill="#1e7145"/>
<path d="M9 3 H10.8 V4.6 H9 Z M11.6 3 H13.4 V4.6 H11.6 Z M9 5.4 H10.8 V7 H9 Z M11.6 5.4 H13.4 V7 H11.6 Z M9 7.8 H10.8 V9.4 H9 Z M11.6 7.8 H13.4 V9.4 H11.6 Z M9 10.2 H10.8 V11.2 H9 Z M11.6 10.2 H13.4 V11.2 H11.6 Z" fill="#e8f2ec"/>
<path d="M2.3 4.5 L4.9 9.5 M4.9 4.5 L2.3 9.5" stroke="#e6f0ea" stroke-width="1.2"/>
</svg>
<svg style="position:absolute;left:86px;top:177px" width="14" height="14" viewBox="0 0 14 14">
<defs><linearGradient id="sg" x1="0" y1="0" x2="1" y2="1"><stop offset="0" stop-color="#6b6ee6"/><stop offset="1" stop-color="#2e2f9a"/></linearGradient>
<linearGradient id="lg" x1="0" y1="0" x2="1" y2="1"><stop offset="0.5" stop-color="#ffffff"/><stop offset="1" stop-color="#aab6de"/></linearGradient></defs>
<rect x="0" y="0" width="14" height="14" fill="url(#sg)"/>
<rect x="2.5" y="0.8" width="8.6" height="6.2" fill="url(#lg)"/>
<rect x="4" y="9.2" width="6" height="4.5" fill="#c9cde6"/>
<rect x="4.6" y="9.8" width="2" height="2" fill="#111"/>
</svg>
<svg style="position:absolute;left:107px;top:175px" width="16" height="16" viewBox="0 0 16 16">
<path d="M3.5 5.2 H9.2 A3.9 3.9 0 0 1 9.2 13 H7.5" stroke="#3a72b8" stroke-width="1.9" fill="none"/>
<path d="M6.2 1.3 L1.2 5.2 L6.2 9.1 Z" fill="#3a72b8"/>
</svg>
<svg style="position:absolute;left:126.5px;top:182px" width="6" height="4"><path d="M0 0 H5.5 L2.75 3.3 Z" fill="#8a8a8a"/></svg>
<svg style="position:absolute;left:139px;top:175px" width="16" height="16" viewBox="0 0 16 16">
<path d="M12.5 5.2 H6.8 A3.9 3.9 0 0 0 6.8 13 H8.5" stroke="#3a72b8" stroke-width="1.9" fill="none"/>
<path d="M9.8 1.3 L14.8 5.2 L9.8 9.1 Z" fill="#3a72b8"/>
</svg>
<svg style="position:absolute;left:158.5px;top:182px" width="6" height="4"><path d="M0 0 H5.5 L2.75 3.3 Z" fill="#8a8a8a"/></svg>
<svg style="position:absolute;left:172px;top:181px" width="8" height="8"><path d="M0 1 H7" stroke="#111" stroke-width="0.9"/><path d="M1 3.5 H6.5 L3.75 6.5 Z" fill="#111"/></svg>
<div style="left:187px;top:177px;width:1px;height:12px;background:#d8d8d8"></div>
<div class="t" style="left:195.5px;white-space:nowrap;top:176.25px;height:16px;line-height:16px;font-size:12.4px;color:#1a1a1a;font-weight:400;letter-spacing:-0.27px">Power Pivot para Excel - Módulo (11) - Tabelas dinâmicas^J gráficos dinâmicos e dashboards</div>
<div style="left:1323px;top:183px;width:10px;height:1px;background:#111"></div>
<div style="left:1368px;top:178px;width:10px;height:10px;border:1.2px solid #111;box-sizing:border-box;border-radius:1px"></div>
<svg style="position:absolute;left:1413px;top:177px" width="12" height="12"><path d="M1 1 L11 11 M11 1 L1 11" stroke="#111" stroke-width="1.1"/></svg>
<div style="left:22px;top:199px;width:56px;height:23px;background:#1b75cf"></div>
<div class="t" style="left:22.0px;width:56px;text-align:center;top:203.75px;height:15px;line-height:15px;font-size:11.5px;color:#fff;font-weight:400;">Arquivo</div>
<div style="left:78px;top:199px;width:96px;height:24px;background:#f3f4f6;border:1px solid #d6d7d9;border-bottom:none;box-sizing:border-box"></div>
<div class="t" style="left:78.0px;width:96px;text-align:center;top:203.75px;height:15px;line-height:15px;font-size:11.5px;color:#222;font-weight:400;">Página Inicial</div>
<div class="t" style="left:189.5px;white-space:nowrap;top:203.75px;height:15px;line-height:15px;font-size:11.5px;color:#222;font-weight:400;">Design</div>
<div class="t" style="left:254px;white-space:nowrap;top:203.75px;height:15px;line-height:15px;font-size:11.5px;color:#222;font-weight:400;">Avançado</div>
<svg style="position:absolute;left:1404px;top:206px" width="10" height="7"><path d="M1 6 L5 2 L9 6" stroke="#999" stroke-width="1.2" fill="none"/></svg>
<svg style="position:absolute;left:1422px;top:201px" width="17" height="17"><circle cx="8.5" cy="8.5" r="8" fill="#1565c0"/><text x="8.5" y="13.3" font-family="Liberation Sans" font-weight="700" font-size="13" fill="#fff" text-anchor="middle">?</text></svg>
<div style="left:22px;top:222px;width:1420px;height:93px;background:#f3f4f6"></div>
<div style="left:174px;top:222px;width:1268px;height:1px;background:#d6d7d9"></div>
<div style="left:22px;top:314px;width:1420px;height:1.5px;background:#dcdcdc"></div>
<div style="left:196px;top:227px;width:1px;height:85px;background:#dcdddf"></div>
<div style="left:444px;top:227px;width:1px;height:85px;background:#dcdddf"></div>
<div style="left:505px;top:227px;width:1px;height:85px;background:#dcdddf"></div>
<div style="left:576.5px;top:227px;width:1px;height:85px;background:#dcdddf"></div>
<div style="left:722px;top:227px;width:1px;height:85px;background:#dcdddf"></div>
<div style="left:1004.5px;top:227px;width:1px;height:85px;background:#dcdddf"></div>
<div style="left:1064px;top:227px;width:1px;height:85px;background:#dcdddf"></div>
<div style="left:1164.5px;top:227px;width:1px;height:85px;background:#dcdddf"></div>
<div style="left:1381px;top:227px;width:1px;height:85px;background:#dcdddf"></div>
<div class="t" style="left:-12.0px;width:240px;text-align:center;top:297.75px;height:15px;line-height:15px;font-size:11.3px;color:#222;font-weight:400;">Área de Transferência</div>
<div class="t" style="left:199.5px;width:240px;text-align:center;top:297.75px;height:15px;line-height:15px;font-size:11.3px;color:#222;font-weight:400;">Obter Dados Externos</div>
<div class="t" style="left:528.0px;width:240px;text-align:center;top:297.75px;height:15px;line-height:15px;font-size:11.3px;color:#222;font-weight:400;">Formatação</div>
<div class="t" style="left:743.0px;width:240px;text-align:center;top:297.75px;height:15px;line-height:15px;font-size:11.3px;color:#222;font-weight:400;">Classificar e Filtrar</div>
<div class="t" style="left:913.0px;width:240px;text-align:center;top:297.75px;height:15px;line-height:15px;font-size:11.3px;color:#222;font-weight:400;">Localizar</div>
<div class="t" style="left:994.0px;width:240px;text-align:center;top:297.75px;height:15px;line-height:15px;font-size:11.3px;color:#222;font-weight:400;">Cálculos</div>
<div class="t" style="left:1152.0px;width:240px;text-align:center;top:297.75px;height:15px;line-height:15px;font-size:11.3px;color:#222;font-weight:400;">Exibir</div>
<svg style="position:absolute;left:35px;top:231px" width="28" height="32" viewBox="0 0 28 32">
<rect x="1" y="4" width="23.6" height="22.8" fill="#c9d3e3"/>
<rect x="5" y="3" width="15.6" height="6.2" fill="#f3f4f6"/>
<rect x="6.2" y="4" width="13.6" height="3.8" fill="#a4b2ca"/>
<rect x="10.3" y="1" width="5.4" height="3.2" fill="#a4b2ca"/>
<rect x="12.1" y="2.2" width="1.8" height="1.6" fill="#fff"/>
<rect x="9" y="11" width="19" height="21" fill="#f3f4f6"/>
<path d="M11 13 H21.8 L26 17.2 V30.2 H11 Z" fill="#ecf2fc" stroke="#a4b2ca" stroke-width="1.6"/>
<path d="M21.8 13 V17.2 H26" fill="none" stroke="#a4b2ca" stroke-width="1.4"/>
</svg>
<div class="t" style="left:29.0px;width:40px;text-align:center;top:265.15px;height:15px;line-height:15px;font-size:11.3px;color:#8d8d8d;font-weight:400;">Colar</div>
<svg style="position:absolute;left:73px;top:229.9px" width="17" height="17" viewBox="0 0 17 17">
<rect x="0" y="1.5" width="4.6" height="13.5" fill="#c9d3e3"/>
<rect x="12" y="1.5" width="2" height="3" fill="#c9d3e3"/>
<rect x="3.8" y="1.6" width="7" height="2" fill="#a4b2ca"/><rect x="5.6" y="0" width="3.2" height="2" fill="#a4b2ca"/>
<rect x="5.5" y="5" width="10.5" height="4" fill="#a4b2ca"/><path d="M6.7 6.2 H8.3 M9.9 6.2 H11.5 M13.1 6.2 H14.7" stroke="#fff" stroke-width="1.8"/>
<path d="M7 9.8 H14.5 L10.75 12.5 Z" fill="#a4b2ca"/>
<rect x="5.5" y="12.2" width="10.5" height="4" fill="#a4b2ca"/><path d="M6.7 13.4 H8.3 M9.9 13.4 H11.5 M13.1 13.4 H14.7" stroke="#fff" stroke-width="1.8"/>
</svg>
<div class="t" style="left:92.3px;white-space:nowrap;top:231.15px;height:15px;line-height:15px;font-size:11.3px;color:#8d8d8d;font-weight:400;">Colar Acréscimo</div>
<svg style="position:absolute;left:73px;top:251.7px" width="17" height="17" viewBox="0 0 17 17">
<rect x="0" y="1.5" width="4.6" height="13.5" fill="#c9d3e3"/>
<rect x="12" y="1.5" width="2" height="3" fill="#c9d3e3"/>
<rect x="3.8" y="1.6" width="7" height="2" fill="#a4b2ca"/><rect x="5.6" y="0" width="3.2" height="2" fill="#a4b2ca"/>
<path d="M5.7 5.3 H15.5 V8.5 H5.7 Z" fill="none" stroke="#a4b2ca" stroke-width="1"/>
<rect x="5.5" y="10.5" width="10.5" height="5" fill="#a4b2ca"/><path d="M6.9 12.9 H8.5 M10 12.9 H11.6 M13.1 12.9 H14.7" stroke="#dde4ef" stroke-width="2"/>
</svg>
<div class="t" style="left:92.3px;white-space:nowrap;top:252.95px;height:15px;line-height:15px;font-size:11.3px;color:#8d8d8d;font-weight:400;">Colar Substituição</div>
<svg style="position:absolute;left:73px;top:274px" width="16" height="16" viewBox="0 0 16 16">
<path d="M0.5 0.5 H6 L8 2.5 V11 H0.5 Z" fill="#fff" stroke="#555" stroke-width="1"/>
<path d="M2 4 H4 M2 6.5 H4 M2 9 H4" stroke="#2d6db5" stroke-width="1"/>
<path d="M5.5 4.5 H11.5 L14.5 7.5 V15.5 H5.5 Z" fill="#fff" stroke="#555" stroke-width="1"/>
<path d="M7.5 9 H12.5 M7.5 11.5 H12.5 M7.5 13.8 H12.5" stroke="#2d6db5" stroke-width="1"/>
</svg>
<div class="t" style="left:92.3px;white-space:nowrap;top:275.05px;height:15px;line-height:15px;font-size:11.3px;color:#1a1a1a;font-weight:400;">Copiar</div>
<svg style="position:absolute;left:221px;top:232px" width="21" height="28" viewBox="0 0 21 28">
<path d="M0.5 0.5 H14 L20.5 6.5 V27.5 H0.5 Z" fill="#fff" stroke="#6b6b6b" stroke-width="1"/>
<path d="M14 0.5 V6.5 H20.5" fill="none" stroke="#6b6b6b" stroke-width="1"/></svg>
<svg style="position:absolute;left:235px;top:244px" width="13" height="18" viewBox="0 0 13 18">
<path d="M0 2.5 A6.5 2.5 0 0 1 13 2.5 V15.5 A6.5 2.5 0 0 1 0 15.5 Z" fill="#e8c173"/>
<ellipse cx="6.5" cy="2.5" rx="6.5" ry="2.5" fill="#f3d79c"/>
</svg>
<div class="t" style="left:196.0px;width:70px;text-align:center;top:265.15px;height:15px;line-height:15px;font-size:11.3px;color:#1a1a1a;font-weight:400;">Do Banco</div>
<div class="t" style="left:196.0px;width:70px;text-align:center;top:277.95px;height:15px;line-height:15px;font-size:11.3px;color:#1a1a1a;font-weight:400;">de Dados <span class="dd"></span></div>
<svg style="position:absolute;left:277px;top:231px" width="34" height="33" viewBox="0 0 34 33">
<rect x="10.5" y="0.5" width="22" height="19" fill="#fff" stroke="#777" stroke-width="1"/>
<rect x="10" y="0" width="23" height="3" fill="#666"/>
<path d="M10.5 8 H32.5 M10.5 13.5 H32.5 M17.5 3 V19.5 M25 3 V19.5" stroke="#999" stroke-width="0.9"/>
<path d="M20 23 Q21 16 27 15" stroke="#5a9a7a" stroke-width="2" fill="none"/>
<path d="M24 12 L29 15 L24.5 19" fill="#5a9a7a"/>
<circle cx="8.5" cy="24.5" r="7.5" fill="#fff" stroke="#4a86c8" stroke-width="1.2"/>
<path d="M1 24.5 H16 M8.5 17 V32 M2.5 20.5 H14.5 M2.5 28.5 H14.5" stroke="#4a86c8" stroke-width="1"/>
<ellipse cx="8.5" cy="24.5" rx="3.5" ry="7.5" fill="none" stroke="#4a86c8" stroke-width="1"/>
</svg>
<div class="t" style="left:258.5px;width:70px;text-align:center;top:265.15px;height:15px;line-height:15px;font-size:11.3px;color:#1a1a1a;font-weight:400;">Do Serviço</div>
<div class="t" style="left:258.5px;width:70px;text-align:center;top:277.95px;height:15px;line-height:15px;font-size:11.3px;color:#1a1a1a;font-weight:400;">de Dados <span class="dd"></span></div>
<svg style="position:absolute;left:342px;top:232px" width="21" height="28" viewBox="0 0 21 28">
<path d="M0.5 0.5 H14 L20.5 6.5 V27.5 H0.5 Z" fill="#fff" stroke="#6b6b6b" stroke-width="1"/>
<path d="M14 0.5 V6.5 H20.5" fill="none" stroke="#6b6b6b" stroke-width="1"/></svg>
<svg style="position:absolute;left:353px;top:246px" width="16" height="16" viewBox="0 0 16 16">
<circle cx="8" cy="8" r="4" fill="#fff" stroke="#3b78c2" stroke-width="2"/>
<path d="M8 0 V4.5 M8 11.5 V16 M0 8 H4.5 M11.5 8 H16" stroke="#3b78c2" stroke-width="3"/>
</svg>
<div class="t" style="left:317.5px;width:70px;text-align:center;top:265.15px;height:15px;line-height:15px;font-size:11.3px;color:#1a1a1a;font-weight:400;">De Outras</div>
<div class="t" style="left:317.5px;width:70px;text-align:center;top:277.95px;height:15px;line-height:15px;font-size:11.3px;color:#1a1a1a;font-weight:400;">Fontes</div>
<svg style="position:absolute;left:399px;top:232px" width="21" height="28" viewBox="0 0 21 28">
<path d="M0.5 0.5 H14 L20.5 6.5 V27.5 H0.5 Z" fill="#fff" stroke="#6b6b6b" stroke-width="1"/>
<path d="M14 0.5 V6.5 H20.5" fill="none" stroke="#6b6b6b" stroke-width="1"/><path d="M3 8.0 H17" stroke="#999" stroke-width="0.8"/><path d="M3 11.3 H17" stroke="#999" stroke-width="0.8"/><path d="M3 14.6 H17" stroke="#999" stroke-width="0.8"/><path d="M3 17.9 H17" stroke="#999" stroke-width="0.8"/><path d="M3 21.2 H17" stroke="#999" stroke-width="0.8"/><path d="M3 24.5 H17" stroke="#999" stroke-width="0.8"/></svg>
<svg style="position:absolute;left:414px;top:244px" width="13" height="18" viewBox="0 0 13 18">
<path d="M0 2.5 A6.5 2.5 0 0 1 13 2.5 V15.5 A6.5 2.5 0 0 1 0 15.5 Z" fill="#e8c173"/>
<ellipse cx="6.5" cy="2.5" rx="6.5" ry="2.5" fill="#f3d79c"/>
</svg>
<div class="t" style="left:374.5px;width:70px;text-align:center;top:265.15px;height:15px;line-height:15px;font-size:11.3px;color:#1a1a1a;font-weight:400;">Conexões</div>
<div class="t" style="left:374.5px;width:70px;text-align:center;top:277.95px;height:15px;line-height:15px;font-size:11.3px;color:#1a1a1a;font-weight:400;">Existentes</div>
<svg style="position:absolute;left:464px;top:232px" width="21" height="28" viewBox="0 0 21 28">
<path d="M0.5 0.5 H14 L20.5 6.5 V27.5 H0.5 Z" fill="#fff" stroke="#6b6b6b" stroke-width="1"/>
<path d="M14 0.5 V6.5 H20.5" fill="none" stroke="#6b6b6b" stroke-width="1"/></svg>
<svg style="position:absolute;left:474px;top:246px" width="18" height="18" viewBox="0 0 18 18">
<circle cx="9" cy="8.8" r="7.6" fill="#fff"/>
<path d="M2.6 8 A6.2 6.2 0 0 1 13.6 4.6" stroke="#6aa891" stroke-width="2.6" fill="none"/>
<path d="M10.6 1.2 L16.3 1 L15.8 6.8 Z" fill="#6aa891"/>
<path d="M15.4 9.6 A6.2 6.2 0 0 1 4.4 13" stroke="#6aa891" stroke-width="2.6" fill="none"/>
<path d="M7.4 16.4 L1.7 16.6 L2.2 10.8 Z" fill="#6aa891"/>
</svg>
<div class="t" style="left:438.5px;width:70px;text-align:center;top:265.15px;height:15px;line-height:15px;font-size:11.3px;color:#1a1a1a;font-weight:400;">Atualizar</div>
<svg style="position:absolute;left:470px;top:283px" width="7" height="4"><path d="M0 0 H7 L3.5 3.5 Z" fill="#9a9a9a"/></svg>
<svg style="position:absolute;left:526px;top:232px" width="29" height="28" viewBox="0 0 29 28">
<rect x="0.6" y="0.6" width="27.8" height="27" fill="#fff" stroke="#777" stroke-width="1.2"/>
<rect x="3" y="3" width="4.6" height="4.6" fill="#b4b4b4"/>
<rect x="9.3" y="3" width="15.7" height="4.6" fill="#b4b4b4"/>
<rect x="3" y="9.3" width="4.6" height="15.7" fill="#b4b4b4"/>
<path d="M12 22.3 Q22 22.3 22 12.5" stroke="#3a72b8" stroke-width="2" fill="none"/>
<path d="M19 14.8 L22 10.6 L25 14.8" stroke="#3a72b8" stroke-width="2" fill="none"/>
<path d="M14.2 19.3 L10 22.3 L14.2 25.3" stroke="#3a72b8" stroke-width="2" fill="none"/>
</svg>
<div class="t" style="left:504.5px;width:70px;text-align:center;top:265.15px;height:15px;line-height:15px;font-size:11.3px;color:#1a1a1a;font-weight:400;">Tabela</div>
<div class="t" style="left:504.5px;width:70px;text-align:center;top:277.95px;height:15px;line-height:15px;font-size:11.3px;color:#1a1a1a;font-weight:400;">Dinâmica <span class="dd"></span></div>
<div class="t" style="left:584px;white-space:nowrap;top:230.75px;height:15px;line-height:15px;font-size:11.3px;color:#8d8d8d;font-weight:400;">Tipo de Dados: <span class="dd" style="margin-left:4px;border-top-color:#c8c8c8"></span></div>
<div class="t" style="left:584px;white-space:nowrap;top:252.75px;height:15px;line-height:15px;font-size:11.3px;color:#1a1a1a;font-weight:400;">Formatar: Porcentagem <span class="dd" style="margin-left:1px"></span></div>
<div class="t" style="left:588px;white-space:nowrap;top:273.05px;height:18px;line-height:18px;font-size:14px;color:#555;font-weight:400;">$</div>
<svg style="position:absolute;left:601px;top:281px" width="7" height="4"><path d="M0 0 H7 L3.5 3.5 Z" fill="#9a9a9a"/></svg>
<svg style="position:absolute;left:615px;top:276px" width="14" height="13" viewBox="0 0 14 13"><circle cx="3" cy="3" r="2.2" fill="none" stroke="#555" stroke-width="1.1"/><circle cx="11" cy="10" r="2.2" fill="none" stroke="#555" stroke-width="1.1"/><path d="M11 0.5 L3 12.5" stroke="#555" stroke-width="1.1"/></svg>
<svg style="position:absolute;left:639px;top:278px" width="7" height="10" viewBox="0 0 7 10"><circle cx="3.8" cy="2.6" r="2.3" fill="#444"/><path d="M5.6 2.8 Q5.8 7.5 1 9.2" stroke="#444" stroke-width="1.4" fill="none"/></svg>
<svg style="position:absolute;left:657px;top:274px" width="40" height="16" viewBox="0 0 40 16">
<path d="M1 4 H6 M3.8 1.2 L6.8 4 L3.8 6.8" stroke="#3b7ac6" stroke-width="1.8" fill="none"/>
<text x="7" y="6.6" font-family="Liberation Sans" font-weight="700" font-size="8" fill="#333">.0</text>
<text x="3" y="14" font-family="Liberation Sans" font-weight="700" font-size="8" fill="#333">.00</text>
<text x="25.5" y="6.6" font-family="Liberation Sans" font-weight="700" font-size="8" fill="#333">.00</text>
<path d="M23 11 H28 M25.8 8.2 L28.8 11 L25.8 13.8" stroke="#3b7ac6" stroke-width="1.8" fill="none"/>
<text x="29" y="14" font-family="Liberation Sans" font-weight="700" font-size="8" fill="#333">.0</text>
</svg>
<svg style="position:absolute;left:731px;top:230px" width="16" height="17" viewBox="0 0 16 17">
<text x="0" y="7.5" font-family="Liberation Sans" font-weight="700" font-size="8.5" fill="#98a6bf">A</text>
<text x="0" y="16" font-family="Liberation Sans" font-weight="700" font-size="8.5" fill="#98a6bf">Z</text><path d="M10.5 1 V15 M7.5 12 L10.5 15.5 L13.5 12" stroke="#98a6bf" stroke-width="1.2" fill="none"/></svg>
<div class="t" style="left:749.5px;white-space:nowrap;top:230.75px;height:15px;line-height:15px;font-size:11.3px;color:#8d8d8d;font-weight:400;">Classificar de A a Z</div>
<svg style="position:absolute;left:731px;top:252px" width="16" height="17" viewBox="0 0 16 17">
<text x="0" y="7.5" font-family="Liberation Sans" font-weight="700" font-size="8.5" fill="#98a6bf">Z</text>
<text x="0" y="16" font-family="Liberation Sans" font-weight="700" font-size="8.5" fill="#98a6bf">A</text><path d="M10.5 1 V15 M7.5 12 L10.5 15.5 L13.5 12" stroke="#98a6bf" stroke-width="1.2" fill="none"/></svg>
<div class="t" style="left:749.5px;white-space:nowrap;top:252.75px;height:15px;line-height:15px;font-size:11.3px;color:#8d8d8d;font-weight:400;">Classificar de Z a A</div>
<svg style="position:absolute;left:731px;top:274px" width="16" height="17" viewBox="0 0 16 17">
<text x="0" y="7.5" font-family="Liberation Sans" font-weight="700" font-size="8.5" fill="#98a6bf">A</text>
<text x="0" y="16" font-family="Liberation Sans" font-weight="700" font-size="8.5" fill="#98a6bf">Z</text><path d="M7 13 L11 9 L15 12 L11 16 Z" fill="#a9b6cc"/></svg>
<div class="t" style="left:749.5px;white-space:nowrap;top:274.75px;height:15px;line-height:15px;font-size:11.3px;color:#8d8d8d;font-weight:400;">Limpar Classificação</div>
<svg style="position:absolute;left:876px;top:232px" width="33" height="31" viewBox="0 0 33 31">
<path d="M1 1 H28 V3.6 L17.5 14.5 H13.6 V29 H12 V14.5 L1 3.6 Z" fill="#a5b2c9"/>
<path d="M2.5 3.5 L12.6 13.6" stroke="#fff" stroke-width="0.8"/>
<path d="M15 15 L30.5 30" stroke="#a5b2c9" stroke-width="3.2"/>
<path d="M14.2 29 L31 15.5" stroke="#a5b2c9" stroke-width="2.2"/>
<path d="M15.2 19.5 L18.5 22.5 L15.2 25.5 Z" fill="#a5b2c9"/>
</svg>
<div class="t" style="left:850.5px;width:80px;text-align:center;top:265.15px;height:15px;line-height:15px;font-size:11.3px;color:#8d8d8d;font-weight:400;">Limpar Todos</div>
<div class="t" style="left:850.5px;width:80px;text-align:center;top:277.95px;height:15px;line-height:15px;font-size:11.3px;color:#8d8d8d;font-weight:400;">os Filtros</div>
<svg style="position:absolute;left:946px;top:233px" width="34" height="31" viewBox="0 0 34 31">
<rect x="1" y="1" width="29" height="25" fill="#a5b2c9"/>
<path d="M2.3 6.3 H8 V10.4 H2.3 Z M9.3 6.3 H15 V10.4 H9.3 Z M16.3 6.3 H22 V10.4 H16.3 Z M23.3 6.3 H28.8 V10.4 H23.3 Z
M2.3 11.4 H8 V15.4 H2.3 Z M9.3 11.4 H15 V15.4 H9.3 Z M16.3 11.4 H22 V15.4 H16.3 Z M23.3 11.4 H28.8 V15.4 H23.3 Z
M2.3 16.4 H8 V20.4 H2.3 Z M9.3 16.4 H15 V20.4 H9.3 Z M16.3 16.4 H22 V20.4 H16.3 Z M23.3 16.4 H28.8 V20.4 H23.3 Z
M2.3 21.4 H8 V25 H2.3 Z M9.3 21.4 H15 V25 H9.3 Z M16.3 21.4 H22 V25 H16.3 Z M23.3 21.4 H28.8 V25 H23.3 Z" fill="#eaf1fb"/>
<rect x="9.3" y="6.3" width="5.7" height="18.7" fill="#ccd7e8"/>
<rect x="16.5" y="11" width="4.6" height="20" fill="#f3f4f6"/><rect x="15" y="23" width="7.6" height="8" fill="#f3f4f6"/>
<rect x="26.3" y="11" width="4.6" height="20" fill="#f3f4f6"/><rect x="24.8" y="11" width="7.6" height="6" fill="#f3f4f6"/>
<path d="M18.8 12 V28.5 M15.6 25 L18.8 28.6 L22 25" stroke="#a5b2c9" stroke-width="2" fill="none"/>
<path d="M28.6 29 V12.5 M25.4 16 L28.6 12.4 L31.8 16" stroke="#a5b2c9" stroke-width="2" fill="none"/>
</svg>
<div class="t" style="left:919.0px;width:80px;text-align:center;top:265.15px;height:15px;line-height:15px;font-size:11.3px;color:#8d8d8d;font-weight:400;">Classificar</div>
<div class="t" style="left:919.0px;width:80px;text-align:center;top:277.95px;height:15px;line-height:15px;font-size:11.3px;color:#8d8d8d;font-weight:400;">por Coluna <span class="dd" style="border-top-color:#c8c8c8"></span></div>
<svg style="position:absolute;left:1019px;top:233px" width="28" height="25" viewBox="0 0 28 25">
<path d="M7 1 H11 V4 H13 V9 H15 V9 H13 V13 H15 V9 H13 Z" fill="#757575"/>
<path d="M7 1 H11 V4 H13 V13 H15 V11 H17 V13 H15 V4 H17 V1 H21 V4 H23 V9 H25 V13 H27 V24 H16 V13 H12 V24 H1 V13 H3 V9 H5 V4 H7 Z" fill="#757575"/>
<path d="M8 2 V4 M20 2 V4 M6 5 V9 M22 5 V9 M4 10 V13 M24 10 V13 M2 14 V23 M26 14 V23" stroke="#fff" stroke-width="0.9"/>
<rect x="13" y="11.5" width="2" height="1" fill="#fff"/>
</svg>
<div class="t" style="left:998.0px;width:70px;text-align:center;top:265.15px;height:15px;line-height:15px;font-size:11.3px;color:#1a1a1a;font-weight:400;">Localizar</div>
<svg style="position:absolute;left:1074px;top:230px" width="12" height="16" viewBox="0 0 12 16"><path d="M11 2 V1 H1 L6.5 8 L1 15 H11 V14" stroke="#444" stroke-width="1.3" fill="none"/></svg>
<div class="t" style="left:1091.3px;white-space:nowrap;top:230.75px;height:15px;line-height:15px;font-size:11.3px;color:#1a1a1a;font-weight:400;">AutoSoma <span class="dd" style="margin-left:2px"></span></div>
<svg style="position:absolute;left:1071px;top:251px" width="15" height="18" viewBox="0 0 15 18">
<path d="M7 2.5 H13.5 V17 H4 V8" fill="#fff" stroke="#666" stroke-width="1"/>
<rect x="8" y="4" width="4" height="3" fill="#d9532f"/><rect x="6" y="8.5" width="6" height="2.5" fill="#e8bd6a"/><rect x="6" y="12.5" width="6" height="2.5" fill="#4e9a7c"/>
<circle cx="3.5" cy="4" r="1.3" fill="#f2b35b"/>
<path d="M3.5 0.5 V7.5 M0 4 H7 M1 1.5 L6 6.5 M6 1.5 L1 6.5" stroke="#f2b35b" stroke-width="0.7"/>
</svg>
<div class="t" style="left:1091.3px;white-space:nowrap;top:252.95px;height:15px;line-height:15px;font-size:11.3px;color:#1a1a1a;font-weight:400;">Criar KPI</div>
<div style="left:1169px;top:227px;width:53.5px;height:66px;background:#dfe0e2;border:1px solid #c4c5c7;box-sizing:border-box"></div>
<div style="left:1286px;top:227px;width:44.5px;height:66px;background:#dfe0e2;border:1px solid #c4c5c7;box-sizing:border-box"></div>
<div style="left:1330.5px;top:227px;width:44.5px;height:66px;background:#dfe0e2;border:1px solid #c4c5c7;box-sizing:border-box"></div>
<svg style="position:absolute;left:1181px;top:232px" width="31" height="28" viewBox="0 0 31 28">
<rect x="0.5" y="0.5" width="29" height="22" fill="#fff" stroke="#777" stroke-width="1"/>
<rect x="1" y="1" width="28" height="4" fill="#b7c9e6"/><rect x="1" y="1" width="6" height="21.5" fill="#b7c9e6"/>
<path d="M0.5 10 H29.5 M0.5 16 H29.5 M7.5 1 V22.5 M15 1 V22.5 M22.5 1 V22.5" stroke="#8a8a8a" stroke-width="0.9"/>
<path d="M1 22.5 L1.5 26.5 H8 L10 22.5 M10 22.5 L10.5 26.5 H17 L19 22.5" stroke="#777" stroke-width="1" fill="#fff"/>
</svg>
<div class="t" style="left:1160.5px;width:70px;text-align:center;top:265.15px;height:15px;line-height:15px;font-size:11.3px;color:#1a1a1a;font-weight:400;">Exibição</div>
<div class="t" style="left:1160.5px;width:70px;text-align:center;top:277.95px;height:15px;line-height:15px;font-size:11.3px;color:#1a1a1a;font-weight:400;">de Dados</div>
<svg style="position:absolute;left:1239px;top:231px" width="32" height="30" viewBox="0 0 32 30">
<rect x="18.5" y="0.5" width="12" height="10" fill="#fff" stroke="#888" stroke-width="1"/><rect x="18" y="0" width="13" height="3" fill="#3b7ac6"/>
<rect x="0.5" y="9.5" width="12" height="10" fill="#fff" stroke="#888" stroke-width="1"/><rect x="0" y="9" width="13" height="3" fill="#3b7ac6"/>
<rect x="16.5" y="18.5" width="12" height="10" fill="#fff" stroke="#888" stroke-width="1"/><rect x="16" y="18" width="13" height="3" fill="#3b7ac6"/>
<path d="M12.5 12 L18.5 5 M12.5 15 L16.5 22" stroke="#888" stroke-width="1"/>
<path d="M21 5.5 H28 M21 7.5 H28 M3 14.5 H10 M3 16.5 H10 M19 23.5 H26 M19 25.5 H26" stroke="#888" stroke-width="0.8"/>
</svg>
<div class="t" style="left:1218.5px;width:70px;text-align:center;top:265.15px;height:15px;line-height:15px;font-size:11.3px;color:#1a1a1a;font-weight:400;">Exibição de</div>
<div class="t" style="left:1218.5px;width:70px;text-align:center;top:277.95px;height:15px;line-height:15px;font-size:11.3px;color:#1a1a1a;font-weight:400;">Diagrama</div>
<svg style="position:absolute;left:1293px;top:231px" width="30" height="29" viewBox="0 0 30 29">
<rect x="0.5" y="0.5" width="27" height="27" fill="none" stroke="#777" stroke-width="1" stroke-dasharray="2 1.5"/>
<rect x="6" y="6" width="21" height="21" fill="#fff" stroke="#888" stroke-width="1"/>
<path d="M6 13 H27 M6 20 H27 M13 6 V27 M20 6 V27" stroke="#888" stroke-width="1"/>
<path d="M0.5 27.5 L28 0.5" stroke="#777" stroke-width="1"/>
</svg>
<div class="t" style="left:1278.0px;width:60px;text-align:center;top:265.15px;height:15px;line-height:15px;font-size:11.3px;color:#1a1a1a;font-weight:400;">Mostrar</div>
<div class="t" style="left:1278.0px;width:60px;text-align:center;top:277.95px;height:15px;line-height:15px;font-size:11.3px;color:#1a1a1a;font-weight:400;">Ocultos</div>
<svg style="position:absolute;left:1338px;top:233px" width="32" height="28" viewBox="0 0 32 28">
<rect x="0.5" y="0.5" width="29" height="24" fill="#fff" stroke="#777" stroke-width="1"/>
<rect x="0" y="0" width="30" height="4" fill="#777"/>
<rect x="1" y="19" width="14" height="5.5" fill="#b7c9e6"/>
<path d="M0.5 9.5 H29.5 M0.5 14.5 H29.5 M0.5 19.5 H29.5 M8 4 V24.5 M15.5 4 V24.5" stroke="#999" stroke-width="0.9"/>
</svg>
<div class="t" style="left:1351px;top:231px;font-family:'Liberation Serif',serif;font-style:italic;font-size:25px;line-height:30px;color:#444;letter-spacing:-2px">fx</div>
<div class="t" style="left:1322.5px;width:60px;text-align:center;top:265.15px;height:15px;line-height:15px;font-size:11.3px;color:#1a1a1a;font-weight:400;">Área de</div>
<div class="t" style="left:1322.5px;width:60px;text-align:center;top:277.95px;height:15px;line-height:15px;font-size:11.3px;color:#1a1a1a;font-weight:400;">Cálculo</div>
<div style="left:23px;top:316px;width:2px;height:417px;background:#217346;width:1.3px"></div>
<div style="left:1437.7px;top:316px;width:1.3px;height:417px;background:#217346"></div>
<div style="left:24.5px;top:316px;width:1413.5px;height:23px;background:#fff;border:1px solid #9d9d9d;box-sizing:border-box"></div>
<div class="t" style="left:37px;white-space:nowrap;top:317.55px;height:20px;line-height:20px;font-size:15.5px;color:#111;font-weight:400;">[Categoria]</div>
<svg style="position:absolute;left:132.5px;top:325.5px" width="8" height="5"><path d="M0 0 H7.5 L3.75 4 Z" fill="#111"/></svg>
<div class="t" style="left:201px;top:315px;font-family:'Liberation Serif',serif;font-style:italic;font-size:18px;line-height:22px;color:#666;letter-spacing:0px">fx</div>
<div style="left:221px;top:317px;width:1px;height:21px;background:#c8c8c8"></div>
<div class="t" style="left:224px;white-space:nowrap;top:316.75px;height:21px;line-height:21px;font-size:16px;color:#111;font-weight:400;">% CATEGORIA:=[SOMA DE VENDAS]/[VENDAS TOTAIS]</div>
<div style="left:1422px;top:317px;width:1px;height:21px;background:#b8b8b8"></div>
<svg style="position:absolute;left:1425px;top:322px" width="9" height="10"><path d="M1 1 L4.5 4 L8 1 M1 5.5 L4.5 8.5 L8 5.5" stroke="#111" stroke-width="1.5" fill="none"/></svg>
<div style="left:42px;top:344px;width:1379px;height:22px;background:#217346"></div>
<div style="left:1421px;top:344px;width:16.7px;height:94px;background:#ebebeb"></div>
<svg style="position:absolute;left:29px;top:349px" width="10" height="14"><path d="M9 0.5 V13.5 H0 Z" fill="#d3d3d3"/></svg>
<div class="t" style="left:48px;white-space:nowrap;top:345.05px;height:21px;line-height:21px;font-size:16px;color:#fffbe8;font-weight:400;">Nº</div>
<div style="left:78px;top:347px;width:16px;height:16px;background:linear-gradient(#fbfbfd,#dcdde4);border:1px solid #a5a9b5;border-radius:2px;box-sizing:border-box"><svg width="14" height="14" style="position:absolute;left:0;top:0"><path d="M3.5 5.5 H10.5 L7 9 Z" fill="#27368c"/></svg></div>
<div style="left:96px;top:344px;width:1px;height:22px;background:#d6e3da"></div>
<div class="t" style="left:102px;white-space:nowrap;top:345.05px;height:21px;line-height:21px;font-size:16px;color:#fffbe8;font-weight:400;">Mês</div>
<div style="left:146px;top:347px;width:16px;height:16px;background:linear-gradient(#fbfbfd,#dcdde4);border:1px solid #a5a9b5;border-radius:2px;box-sizing:border-box"><svg width="14" height="14" style="position:absolute;left:0;top:0"><path d="M3.5 5.5 H10.5 L7 9 Z" fill="#27368c"/></svg></div>
<div style="left:164px;top:344px;width:1px;height:22px;background:#d6e3da"></div>
<div class="t" style="left:170px;white-space:nowrap;top:345.05px;height:21px;line-height:21px;font-size:16px;color:#fffbe8;font-weight:400;">Data</div>
<div style="left:219px;top:347px;width:16px;height:16px;background:linear-gradient(#fbfbfd,#dcdde4);border:1px solid #a5a9b5;border-radius:2px;box-sizing:border-box"><svg width="14" height="14" style="position:absolute;left:0;top:0"><path d="M3.5 5.5 H10.5 L7 9 Z" fill="#27368c"/></svg></div>
<div style="left:237px;top:344px;width:1px;height:22px;background:#d6e3da"></div>
<div class="t" style="left:243px;white-space:nowrap;top:345.05px;height:21px;line-height:21px;font-size:16px;color:#fffbe8;font-weight:400;">Có...</div>
<div style="left:307px;top:347px;width:16px;height:16px;background:linear-gradient(#fbfbfd,#dcdde4);border:1px solid #a5a9b5;border-radius:2px;box-sizing:border-box"><svg width="14" height="14" style="position:absolute;left:0;top:0"><path d="M3.5 5.5 H10.5 L7 9 Z" fill="#27368c"/></svg></div>
<div style="left:325px;top:344px;width:1px;height:22px;background:#d6e3da"></div>
<div class="t" style="left:331px;white-space:nowrap;top:345.05px;height:21px;line-height:21px;font-size:16px;color:#fffbe8;font-weight:400;">Categoria</div>
<div style="left:543px;top:347px;width:16px;height:16px;background:linear-gradient(#fbfbfd,#dcdde4);border:1px solid #a5a9b5;border-radius:2px;box-sizing:border-box"><svg width="14" height="14" style="position:absolute;left:0;top:0"><path d="M3.5 5.5 H10.5 L7 9 Z" fill="#27368c"/></svg></div>
<div style="left:561px;top:344px;width:1px;height:22px;background:#d6e3da"></div>
<div class="t" style="left:567px;white-space:nowrap;top:345.05px;height:21px;line-height:21px;font-size:16px;color:#fffbe8;font-weight:400;">Qtd</div>
<div style="left:606px;top:347px;width:16px;height:16px;background:linear-gradient(#fbfbfd,#dcdde4);border:1px solid #a5a9b5;border-radius:2px;box-sizing:border-box"><svg width="14" height="14" style="position:absolute;left:0;top:0"><path d="M3.5 5.5 H10.5 L7 9 Z" fill="#27368c"/></svg></div>
<div style="left:624px;top:344px;width:1px;height:22px;background:#d6e3da"></div>
<div class="t" style="left:630px;white-space:nowrap;top:345.05px;height:21px;line-height:21px;font-size:16px;color:#fffbe8;font-weight:400;">Preço Unitário</div>
<div style="left:744px;top:347px;width:16px;height:16px;background:linear-gradient(#fbfbfd,#dcdde4);border:1px solid #a5a9b5;border-radius:2px;box-sizing:border-box"><svg width="14" height="14" style="position:absolute;left:0;top:0"><path d="M3.5 5.5 H10.5 L7 9 Z" fill="#27368c"/></svg></div>
<div style="left:762px;top:344px;width:1px;height:22px;background:#d6e3da"></div>
<div class="t" style="left:768px;white-space:nowrap;top:345.05px;height:21px;line-height:21px;font-size:16px;color:#fffbe8;font-weight:400;">Indice</div>
<div style="left:825px;top:347px;width:16px;height:16px;background:linear-gradient(#fbfbfd,#dcdde4);border:1px solid #a5a9b5;border-radius:2px;box-sizing:border-box"><svg width="14" height="14" style="position:absolute;left:0;top:0"><path d="M3.5 5.5 H10.5 L7 9 Z" fill="#27368c"/></svg></div>
<div style="left:843px;top:344px;width:1px;height:22px;background:#d6e3da"></div>
<div class="t" style="left:849px;white-space:nowrap;top:345.05px;height:21px;line-height:21px;font-size:16px;color:#fffbe8;font-weight:400;">Desconto&nbsp; (Passo a Passo)</div>
<div style="left:1055px;top:347px;width:16px;height:16px;background:linear-gradient(#fbfbfd,#dcdde4);border:1px solid #a5a9b5;border-radius:2px;box-sizing:border-box"><svg width="14" height="14" style="position:absolute;left:0;top:0"><path d="M3.5 5.5 H10.5 L7 9 Z" fill="#27368c"/></svg></div>
<div style="left:1073px;top:344px;width:1px;height:22px;background:#d6e3da"></div>
<div class="t" style="left:1079px;white-space:nowrap;top:345.05px;height:21px;line-height:21px;font-size:16px;color:#fffbe8;font-weight:400;">Desconto&nbsp; (Diretão)</div>
<div style="left:1232px;top:347px;width:16px;height:16px;background:linear-gradient(#fbfbfd,#dcdde4);border:1px solid #a5a9b5;border-radius:2px;box-sizing:border-box"><svg width="14" height="14" style="position:absolute;left:0;top:0"><path d="M3.5 5.5 H10.5 L7 9 Z" fill="#27368c"/></svg></div>
<div style="left:1250px;top:344px;width:1px;height:22px;background:#d6e3da"></div>
<div class="t" style="left:1256px;white-space:nowrap;top:345.05px;height:21px;line-height:21px;font-size:16px;color:#fffbe8;font-weight:400;">Desconto&nbsp; (Vendedor)</div>
<svg style="position:absolute;left:286px;top:347px" width="16" height="15" viewBox="0 0 16 15">
<rect x="1" y="5" width="7" height="9" fill="#a8b4d0"/><rect x="3" y="3" width="7" height="9" fill="#c9d3e8"/>
<circle cx="10.5" cy="5.5" r="4" fill="#e6eaf3"/><path d="M12 8 L15 11" stroke="#d9822b" stroke-width="2"/>
</svg>
<div class="t" style="left:27px;white-space:nowrap;top:369.05px;height:21px;line-height:21px;font-size:16px;color:#7a7a7a;font-weight:400;letter-spacing:-0.5px">8</div>
<div class="t" style="left:38px;width:54px;text-align:right;top:369.05px;height:21px;line-height:21px;font-size:16px;color:#111;font-weight:400;">1</div>
<div class="t" style="left:101.3px;white-space:nowrap;top:369.05px;height:21px;line-height:21px;font-size:16px;color:#111;font-weight:400;">Jan</div>
<div class="t" style="left:160px;width:73px;text-align:right;top:369.05px;height:21px;line-height:21px;font-size:16px;color:#111;font-weight:400;">26/01/...</div>
<div class="t" style="left:242.3px;white-space:nowrap;top:369.05px;height:21px;line-height:21px;font-size:16px;color:#111;font-weight:400;">PR034</div>
<div class="t" style="left:330.3px;white-space:nowrap;top:369.05px;height:21px;line-height:21px;font-size:16px;color:#111;font-weight:400;">Vestuário</div>
<div class="t" style="left:557px;width:63px;text-align:right;top:369.05px;height:21px;line-height:21px;font-size:16px;color:#111;font-weight:400;">2</div>
<div class="t" style="left:620px;width:138px;text-align:right;top:369.05px;height:21px;line-height:21px;font-size:16px;color:#111;font-weight:400;">89,9</div>
<div class="t" style="left:758px;width:81px;text-align:right;top:369.05px;height:21px;line-height:21px;font-size:16px;color:#111;font-weight:400;">3</div>
<div class="t" style="left:839px;width:230px;text-align:right;top:369.05px;height:21px;line-height:21px;font-size:16px;color:#111;font-weight:400;">0,15</div>
<div class="t" style="left:1069px;width:177px;text-align:right;top:369.05px;height:21px;line-height:21px;font-size:16px;color:#111;font-weight:400;">0,15</div>
<div class="t" style="left:1250px;top:366px;width:171px;height:24px;overflow:hidden"><div class="t" style="left:168px;top:0.8px;line-height:25px;font-size:16px;color:#111">0,15</div></div>
<div class="t" style="left:27px;white-space:nowrap;top:393.05px;height:21px;line-height:21px;font-size:16px;color:#7a7a7a;font-weight:400;letter-spacing:-0.5px">9</div>
<div class="t" style="left:38px;width:54px;text-align:right;top:393.05px;height:21px;line-height:21px;font-size:16px;color:#111;font-weight:400;">1</div>
<div class="t" style="left:101.3px;white-space:nowrap;top:393.05px;height:21px;line-height:21px;font-size:16px;color:#111;font-weight:400;">Jan</div>
<div class="t" style="left:160px;width:73px;text-align:right;top:393.05px;height:21px;line-height:21px;font-size:16px;color:#111;font-weight:400;">28/01/...</div>
<div class="t" style="left:242.3px;white-space:nowrap;top:393.05px;height:21px;line-height:21px;font-size:16px;color:#111;font-weight:400;">PR032</div>
<div class="t" style="left:330.3px;white-space:nowrap;top:393.05px;height:21px;line-height:21px;font-size:16px;color:#111;font-weight:400;">Calçado</div>
<div class="t" style="left:557px;width:63px;text-align:right;top:393.05px;height:21px;line-height:21px;font-size:16px;color:#111;font-weight:400;">2</div>
<div class="t" style="left:620px;width:138px;text-align:right;top:393.05px;height:21px;line-height:21px;font-size:16px;color:#111;font-weight:400;">250</div>
<div class="t" style="left:758px;width:81px;text-align:right;top:393.05px;height:21px;line-height:21px;font-size:16px;color:#111;font-weight:400;">4</div>
<div class="t" style="left:839px;width:230px;text-align:right;top:393.05px;height:21px;line-height:21px;font-size:16px;color:#111;font-weight:400;">0,1</div>
<div class="t" style="left:1069px;width:177px;text-align:right;top:393.05px;height:21px;line-height:21px;font-size:16px;color:#111;font-weight:400;">0,1</div>
<div class="t" style="left:1250px;top:390px;width:171px;height:24px;overflow:hidden"><div class="t" style="left:159.5px;top:0.8px;line-height:25px;font-size:16px;color:#111">0,1</div></div>
<div class="t" style="left:27px;white-space:nowrap;top:417.05px;height:21px;line-height:21px;font-size:16px;color:#7a7a7a;font-weight:400;letter-spacing:-0.5px">10</div>
<div class="t" style="left:38px;width:54px;text-align:right;top:417.05px;height:21px;line-height:21px;font-size:16px;color:#111;font-weight:400;">1</div>
<div class="t" style="left:101.3px;white-space:nowrap;top:417.05px;height:21px;line-height:21px;font-size:16px;color:#111;font-weight:400;">Jan</div>
<div class="t" style="left:160px;width:73px;text-align:right;top:417.05px;height:21px;line-height:21px;font-size:16px;color:#111;font-weight:400;">29/01/...</div>
<div class="t" style="left:242.3px;white-space:nowrap;top:417.05px;height:21px;line-height:21px;font-size:16px;color:#111;font-weight:400;">PR013</div>
<div class="t" style="left:330.3px;white-space:nowrap;top:417.05px;height:21px;line-height:21px;font-size:16px;color:#111;font-weight:400;">Vestuário</div>
<div class="t" style="left:557px;width:63px;text-align:right;top:417.05px;height:21px;line-height:21px;font-size:16px;color:#111;font-weight:400;">1</div>
<div class="t" style="left:620px;width:138px;text-align:right;top:417.05px;height:21px;line-height:21px;font-size:16px;color:#111;font-weight:400;">39,9</div>
<div class="t" style="left:758px;width:81px;text-align:right;top:417.05px;height:21px;line-height:21px;font-size:16px;color:#111;font-weight:400;">3</div>
<div class="t" style="left:839px;width:230px;text-align:right;top:417.05px;height:21px;line-height:21px;font-size:16px;color:#111;font-weight:400;">0,1</div>
<div class="t" style="left:1069px;width:177px;text-align:right;top:417.05px;height:21px;line-height:21px;font-size:16px;color:#111;font-weight:400;">0,1</div>
<div class="t" style="left:1250px;top:414px;width:171px;height:24px;overflow:hidden"><div class="t" style="left:159.5px;top:0.8px;line-height:25px;font-size:16px;color:#111">0,1</div></div>
<div style="left:95.5px;top:366px;width:1px;height:72px;background:#d4d4d4"></div>
<div style="left:163.5px;top:366px;width:1px;height:72px;background:#d4d4d4"></div>
<div style="left:236.5px;top:366px;width:1px;height:72px;background:#d4d4d4"></div>
<div style="left:324.5px;top:366px;width:1px;height:72px;background:#d4d4d4"></div>
<div style="left:560.5px;top:366px;width:1px;height:72px;background:#d4d4d4"></div>
<div style="left:623.5px;top:366px;width:1px;height:72px;background:#d4d4d4"></div>
<div style="left:761.5px;top:366px;width:1px;height:72px;background:#d4d4d4"></div>
<div style="left:842.5px;top:366px;width:1px;height:72px;background:#d4d4d4"></div>
<div style="left:1072.5px;top:366px;width:1px;height:72px;background:#d4d4d4"></div>
<div style="left:1249.5px;top:366px;width:1px;height:72px;background:#d4d4d4"></div>
<div style="left:1421px;top:366px;width:1px;height:72px;background:#d4d4d4"></div>
<div style="left:41px;top:366px;width:1px;height:72px;background:#d4d4d4"></div>
<div style="left:42px;top:389px;width:1379px;height:2px;background:#9a9a9a"></div>
<div style="left:25px;top:389px;width:17px;height:1px;background:#d4d4d4"></div>
<div style="left:25px;top:414px;width:1396px;height:1px;background:#d4d4d4"></div>
<div style="left:25px;top:437px;width:1412.7px;height:4px;background:repeating-linear-gradient(90deg,#3a3a3a 0 1px,#8a8a8a 1px 2px);"></div>
<div style="left:25px;top:438px;width:1412.7px;height:2px;background:repeating-linear-gradient(90deg,#7a7a7a 0 1px,#2a2a2a 1px 2px);"></div>
<div style="left:1421px;top:441px;width:16.7px;height:292px;background:#ebebeb"></div>
<div style="left:1429px;top:364px;width:2.2px;height:17px;background:#8a8a8a"></div>
<div style="left:1429px;top:457px;width:2.2px;height:116px;background:#8a8a8a"></div>
<div style="left:25px;top:462px;width:1396px;height:1px;background:#d4d4d4"></div>
<div style="left:25px;top:483px;width:1396px;height:1px;background:#d4d4d4"></div>
<div style="left:25px;top:504px;width:1396px;height:1px;background:#d4d4d4"></div>
<div style="left:25px;top:525px;width:1396px;height:1px;background:#d4d4d4"></div>
<div style="left:25px;top:546px;width:1396px;height:1px;background:#d4d4d4"></div>
<div style="left:25px;top:567px;width:1396px;height:1px;background:#d4d4d4"></div>
<div style="left:25px;top:588px;width:1396px;height:1px;background:#d4d4d4"></div>
<div style="left:25px;top:609px;width:1396px;height:1px;background:#d4d4d4"></div>
<div style="left:25px;top:630px;width:1396px;height:1px;background:#d4d4d4"></div>
<div style="left:25px;top:651px;width:1396px;height:1px;background:#d4d4d4"></div>
<div style="left:25px;top:672px;width:1396px;height:1px;background:#d4d4d4"></div>
<div style="left:25px;top:693px;width:1396px;height:1px;background:#d4d4d4"></div>
<div style="left:25px;top:714px;width:1396px;height:1px;background:#d4d4d4"></div>
<div style="left:25px;top:735px;width:1396px;height:1px;background:#d4d4d4"></div>
<div style="left:41px;top:441px;width:1px;height:292px;background:#d4d4d4"></div>
<div style="left:95.5px;top:441px;width:1px;height:292px;background:#d4d4d4"></div>
<div style="left:163.5px;top:441px;width:1px;height:292px;background:#d4d4d4"></div>
<div style="left:236.5px;top:441px;width:1px;height:292px;background:#d4d4d4"></div>
<div style="left:324.5px;top:441px;width:1px;height:292px;background:#d4d4d4"></div>
<div style="left:560.5px;top:441px;width:1px;height:292px;background:#d4d4d4"></div>
<div style="left:623.5px;top:441px;width:1px;height:292px;background:#d4d4d4"></div>
<div style="left:761.5px;top:441px;width:1px;height:292px;background:#d4d4d4"></div>
<div style="left:842.5px;top:441px;width:1px;height:292px;background:#d4d4d4"></div>
<div style="left:1072.5px;top:441px;width:1px;height:292px;background:#d4d4d4"></div>
<div style="left:1249.5px;top:441px;width:1px;height:292px;background:#d4d4d4"></div>
<div class="t" style="left:330.5px;white-space:nowrap;top:442.55px;height:21px;line-height:21px;font-size:16px;color:#111;font-weight:400;">VENDAS TOTAIS: 33304,8</div>
<div class="t" style="left:330.5px;white-space:nowrap;top:484.55px;height:21px;line-height:21px;font-size:16px;color:#111;font-weight:400;">SOMA DE VENDAS: 33304,8</div>
<div class="t" style="left:330.5px;white-space:nowrap;top:526.55px;height:21px;line-height:21px;font-size:16px;color:#111;font-weight:400;">% CATEGORIA: 100%</div>
<div class="t" style="left:330.5px;white-space:nowrap;top:568.55px;height:21px;line-height:21px;font-size:16px;color:#111;font-weight:400;">% RESTANTE: 0%</div>
<div style="left:325px;top:525px;width:236px;height:22px;border:2px solid #217346;box-sizing:border-box"></div>
<div style="left:1442px;top:175px;width:2.3px;height:558px;background:linear-gradient(90deg,#a8a8a8,#c4c4c4);-webkit-mask-image:linear-gradient(rgba(0,0,0,0.45),#000 40px)"></div>
<div style="left:1444.3px;top:175px;width:18px;height:558px;background:linear-gradient(90deg,rgba(0,0,0,0.10),rgba(0,0,0,0.06) 80%,rgba(0,0,0,0));-webkit-mask-image:linear-gradient(rgba(0,0,0,0.1),#000 120px)"></div></body></html>
